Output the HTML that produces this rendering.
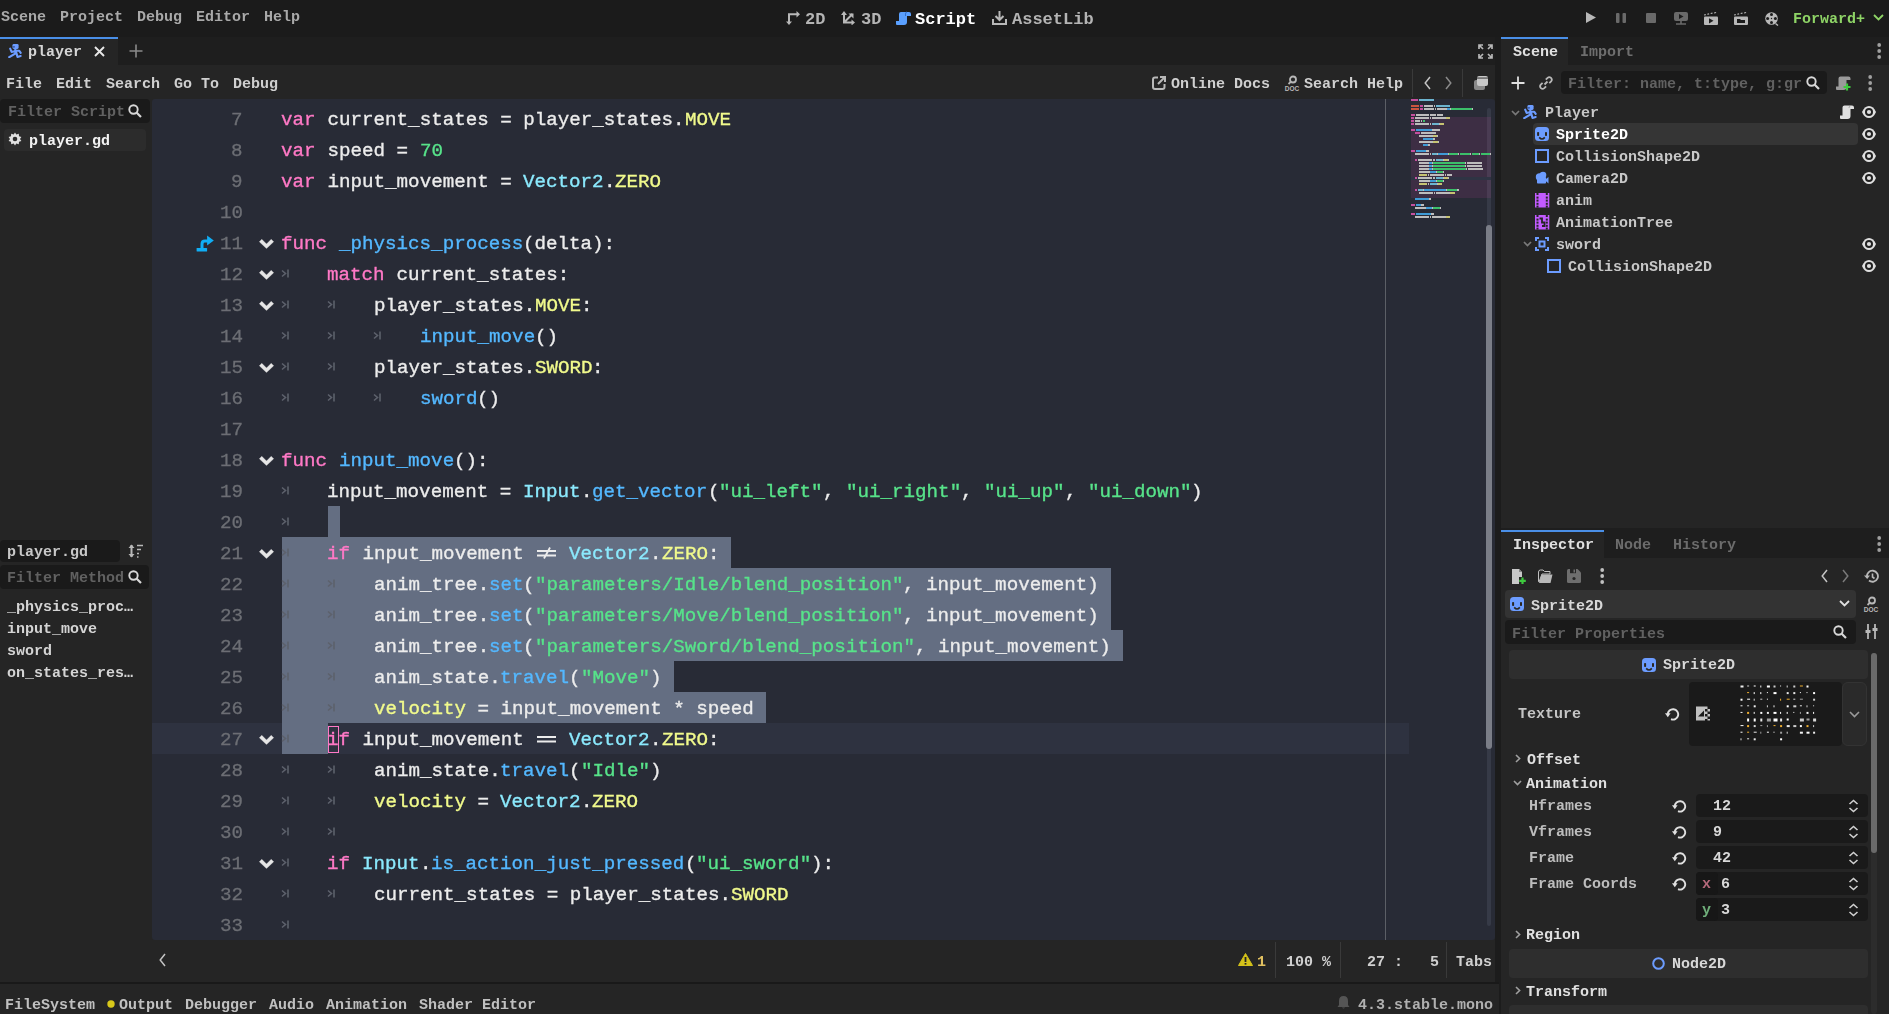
<!DOCTYPE html>
<html><head><meta charset="utf-8"><style>
html,body{margin:0;padding:0;width:1889px;height:1014px;overflow:hidden;background:#1c1c1c}
body>div,body>svg{position:absolute}
.t{font-family:"Liberation Mono";line-height:1;white-space:pre;will-change:transform}
</style></head><body>
<div style="left:0px;top:0px;width:1889px;height:37px;background:#1b1b1b;border-radius:0px;"></div>
<div class="t" style="left:1px;top:10px;font-size:15px;color:#a9a9a9;font-weight:bold;">Scene</div>
<div class="t" style="left:60px;top:10px;font-size:15px;color:#a9a9a9;font-weight:bold;">Project</div>
<div class="t" style="left:137px;top:10px;font-size:15px;color:#a9a9a9;font-weight:bold;">Debug</div>
<div class="t" style="left:196px;top:10px;font-size:15px;color:#a9a9a9;font-weight:bold;">Editor</div>
<div class="t" style="left:264px;top:10px;font-size:15px;color:#a9a9a9;font-weight:bold;">Help</div>
<div class="t" style="left:805px;top:11px;font-size:17px;color:#b4b4b4;font-weight:bold;">2D</div>
<div class="t" style="left:861px;top:11px;font-size:17px;color:#b4b4b4;font-weight:bold;">3D</div>
<div class="t" style="left:915px;top:11px;font-size:17px;color:#ffffff;font-weight:bold;">Script</div>
<div class="t" style="left:1012px;top:11px;font-size:17px;color:#b4b4b4;font-weight:bold;">AssetLib</div>
<div class="t" style="left:1793px;top:12px;font-size:15px;color:#8ed466;font-weight:bold;">Forward+</div>
<div style="left:0px;top:37px;width:1499px;height:28px;background:#1e1e1e;border-radius:0px;"></div>
<div style="left:0px;top:37px;width:118px;height:28px;background:#252525;border-radius:0px;"></div>
<div style="left:0px;top:37px;width:118px;height:2px;background:#4a8fe7;border-radius:0px;"></div>
<div class="t" style="left:28px;top:45px;font-size:15px;color:#d6d6d6;font-weight:bold;">player</div>
<div style="left:0px;top:65px;width:1499px;height:917px;background:#252525;border-radius:0px;"></div>
<div class="t" style="left:6px;top:77px;font-size:15px;color:#d0d0d0;font-weight:bold;">File</div>
<div class="t" style="left:56px;top:77px;font-size:15px;color:#d0d0d0;font-weight:bold;">Edit</div>
<div class="t" style="left:106px;top:77px;font-size:15px;color:#d0d0d0;font-weight:bold;">Search</div>
<div class="t" style="left:174px;top:77px;font-size:15px;color:#d0d0d0;font-weight:bold;">Go To</div>
<div class="t" style="left:233px;top:77px;font-size:15px;color:#d0d0d0;font-weight:bold;">Debug</div>
<div class="t" style="left:1171px;top:77px;font-size:15px;color:#d0d0d0;font-weight:bold;">Online Docs</div>
<div class="t" style="left:1304px;top:77px;font-size:15px;color:#d0d0d0;font-weight:bold;">Search Help</div>
<div style="left:1412px;top:69px;width:1px;height:28px;background:#3a3a3a;border-radius:0px;"></div>
<div style="left:1462px;top:69px;width:1px;height:28px;background:#3a3a3a;border-radius:0px;"></div>
<div style="left:0px;top:99px;width:150px;height:24px;background:#1a1a1a;border-radius:4px;"></div>
<div class="t" style="left:8px;top:105px;font-size:15px;color:#616161;font-weight:bold;">Filter Script</div>
<div style="left:4px;top:129px;width:142px;height:22px;background:#2c2c2c;border-radius:4px;"></div>
<div class="t" style="left:29px;top:134px;font-size:15px;color:#f2f2f2;font-weight:bold;">player.gd</div>
<div style="left:0px;top:540px;width:120px;height:22px;background:#1a1a1a;border-radius:4px;"></div>
<div class="t" style="left:7px;top:545px;font-size:15px;color:#c8c8c8;font-weight:bold;">player.gd</div>
<div style="left:0px;top:565px;width:149px;height:24px;background:#1a1a1a;border-radius:4px;"></div>
<div class="t" style="left:7px;top:571px;font-size:15px;color:#616161;font-weight:bold;">Filter Method</div>
<div class="t" style="left:7px;top:600px;font-size:15px;color:#d4d4d4;font-weight:bold;">_physics_proc…</div>
<div class="t" style="left:7px;top:622px;font-size:15px;color:#d4d4d4;font-weight:bold;">input_move</div>
<div class="t" style="left:7px;top:644px;font-size:15px;color:#d4d4d4;font-weight:bold;">sword</div>
<div class="t" style="left:7px;top:666px;font-size:15px;color:#d4d4d4;font-weight:bold;">on_states_res…</div>
<div style="left:152px;top:99px;width:1343px;height:841px;background:#282b36;border-radius:3px;"></div>
<div style="left:152px;top:723px;width:1257px;height:31px;background:#2e3240;border-radius:0px;"></div>
<div style="left:328px;top:506px;width:12px;height:31px;background:#646e82;border-radius:0px;"></div>
<div style="left:282px;top:537px;width:449px;height:31px;background:#646e82;border-radius:0px;"></div>
<div style="left:282px;top:568px;width:829px;height:31px;background:#646e82;border-radius:0px;"></div>
<div style="left:282px;top:599px;width:829px;height:31px;background:#646e82;border-radius:0px;"></div>
<div style="left:282px;top:630px;width:841px;height:31px;background:#646e82;border-radius:0px;"></div>
<div style="left:282px;top:661px;width:392px;height:31px;background:#646e82;border-radius:0px;"></div>
<div style="left:282px;top:692px;width:484px;height:31px;background:#646e82;border-radius:0px;"></div>
<div style="left:282px;top:723px;width:46px;height:31px;background:#646e82;border-radius:0px;"></div>
<div style="left:1385px;top:99px;width:1px;height:841px;background:#5c5f66;border-radius:0px;"></div>
<div class="t" style="right:1646px;top:110px;font-size:19.2px;color:#6c6e74;font-weight:normal;text-align:right;-webkit-text-stroke:0.3px #6c6e74;transform:translateY(0.5px)">7</div>
<div class="t" style="left:281.4px;top:110px;font-size:19.2px;color:#ff79c6;font-weight:normal;-webkit-text-stroke:0.35px #ff79c6;transform:translateY(0.5px)">var</div>
<div class="t" style="left:315.96px;top:110px;font-size:19.2px;color:#ececec;font-weight:normal;-webkit-text-stroke:0.35px #ececec;transform:translateY(0.5px)"> current_states = player_states.</div>
<div class="t" style="left:684.6px;top:110px;font-size:19.2px;color:#f1fa8c;font-weight:normal;-webkit-text-stroke:0.35px #f1fa8c;transform:translateY(0.5px)">MOVE</div>
<div class="t" style="right:1646px;top:141px;font-size:19.2px;color:#6c6e74;font-weight:normal;text-align:right;-webkit-text-stroke:0.3px #6c6e74;transform:translateY(0.5px)">8</div>
<div class="t" style="left:281.4px;top:141px;font-size:19.2px;color:#ff79c6;font-weight:normal;-webkit-text-stroke:0.35px #ff79c6;transform:translateY(0.5px)">var</div>
<div class="t" style="left:315.96px;top:141px;font-size:19.2px;color:#ececec;font-weight:normal;-webkit-text-stroke:0.35px #ececec;transform:translateY(0.5px)"> speed = </div>
<div class="t" style="left:419.64px;top:141px;font-size:19.2px;color:#57e38a;font-weight:normal;-webkit-text-stroke:0.35px #57e38a;transform:translateY(0.5px)">70</div>
<div class="t" style="right:1646px;top:172px;font-size:19.2px;color:#6c6e74;font-weight:normal;text-align:right;-webkit-text-stroke:0.3px #6c6e74;transform:translateY(0.5px)">9</div>
<div class="t" style="left:281.4px;top:172px;font-size:19.2px;color:#ff79c6;font-weight:normal;-webkit-text-stroke:0.35px #ff79c6;transform:translateY(0.5px)">var</div>
<div class="t" style="left:315.96px;top:172px;font-size:19.2px;color:#ececec;font-weight:normal;-webkit-text-stroke:0.35px #ececec;transform:translateY(0.5px)"> input_movement = </div>
<div class="t" style="left:523.32px;top:172px;font-size:19.2px;color:#8be9fd;font-weight:normal;-webkit-text-stroke:0.35px #8be9fd;transform:translateY(0.5px)">Vector2</div>
<div class="t" style="left:603.96px;top:172px;font-size:19.2px;color:#ececec;font-weight:normal;-webkit-text-stroke:0.35px #ececec;transform:translateY(0.5px)">.</div>
<div class="t" style="left:615.48px;top:172px;font-size:19.2px;color:#f1fa8c;font-weight:normal;-webkit-text-stroke:0.35px #f1fa8c;transform:translateY(0.5px)">ZERO</div>
<div class="t" style="right:1646px;top:203px;font-size:19.2px;color:#6c6e74;font-weight:normal;text-align:right;-webkit-text-stroke:0.3px #6c6e74;transform:translateY(0.5px)">10</div>
<div class="t" style="right:1646px;top:234px;font-size:19.2px;color:#6c6e74;font-weight:normal;text-align:right;-webkit-text-stroke:0.3px #6c6e74;transform:translateY(0.5px)">11</div>
<div class="t" style="left:281.4px;top:234px;font-size:19.2px;color:#ff79c6;font-weight:normal;-webkit-text-stroke:0.35px #ff79c6;transform:translateY(0.5px)">func</div>
<div class="t" style="left:327.48px;top:234px;font-size:19.2px;color:#ececec;font-weight:normal;-webkit-text-stroke:0.35px #ececec;transform:translateY(0.5px)"> </div>
<div class="t" style="left:339.0px;top:234px;font-size:19.2px;color:#54b8ff;font-weight:normal;-webkit-text-stroke:0.35px #54b8ff;transform:translateY(0.5px)">_physics_process</div>
<div class="t" style="left:523.32px;top:234px;font-size:19.2px;color:#ececec;font-weight:normal;-webkit-text-stroke:0.35px #ececec;transform:translateY(0.5px)">(delta):</div>
<div class="t" style="right:1646px;top:265px;font-size:19.2px;color:#6c6e74;font-weight:normal;text-align:right;-webkit-text-stroke:0.3px #6c6e74;transform:translateY(0.5px)">12</div>
<svg style="left:281px;top:269px" width="9" height="9" viewBox="0 0 9 9"><path d="M1 1.5 L4.5 4.5 L1 7.5" fill="none" stroke="#5d616c" stroke-width="1.6"/><rect x="6.2" y="0.5" width="1.6" height="8" fill="#5d616c"/></svg>
<div class="t" style="left:327.48px;top:265px;font-size:19.2px;color:#ff79c6;font-weight:normal;-webkit-text-stroke:0.35px #ff79c6;transform:translateY(0.5px)">match</div>
<div class="t" style="left:385.08px;top:265px;font-size:19.2px;color:#ececec;font-weight:normal;-webkit-text-stroke:0.35px #ececec;transform:translateY(0.5px)"> current_states:</div>
<div class="t" style="right:1646px;top:296px;font-size:19.2px;color:#6c6e74;font-weight:normal;text-align:right;-webkit-text-stroke:0.3px #6c6e74;transform:translateY(0.5px)">13</div>
<svg style="left:281px;top:300px" width="9" height="9" viewBox="0 0 9 9"><path d="M1 1.5 L4.5 4.5 L1 7.5" fill="none" stroke="#5d616c" stroke-width="1.6"/><rect x="6.2" y="0.5" width="1.6" height="8" fill="#5d616c"/></svg>
<svg style="left:327px;top:300px" width="9" height="9" viewBox="0 0 9 9"><path d="M1 1.5 L4.5 4.5 L1 7.5" fill="none" stroke="#5d616c" stroke-width="1.6"/><rect x="6.2" y="0.5" width="1.6" height="8" fill="#5d616c"/></svg>
<div class="t" style="left:373.56px;top:296px;font-size:19.2px;color:#ececec;font-weight:normal;-webkit-text-stroke:0.35px #ececec;transform:translateY(0.5px)">player_states.</div>
<div class="t" style="left:534.84px;top:296px;font-size:19.2px;color:#f1fa8c;font-weight:normal;-webkit-text-stroke:0.35px #f1fa8c;transform:translateY(0.5px)">MOVE</div>
<div class="t" style="left:580.92px;top:296px;font-size:19.2px;color:#ececec;font-weight:normal;-webkit-text-stroke:0.35px #ececec;transform:translateY(0.5px)">:</div>
<div class="t" style="right:1646px;top:327px;font-size:19.2px;color:#6c6e74;font-weight:normal;text-align:right;-webkit-text-stroke:0.3px #6c6e74;transform:translateY(0.5px)">14</div>
<svg style="left:281px;top:331px" width="9" height="9" viewBox="0 0 9 9"><path d="M1 1.5 L4.5 4.5 L1 7.5" fill="none" stroke="#5d616c" stroke-width="1.6"/><rect x="6.2" y="0.5" width="1.6" height="8" fill="#5d616c"/></svg>
<svg style="left:327px;top:331px" width="9" height="9" viewBox="0 0 9 9"><path d="M1 1.5 L4.5 4.5 L1 7.5" fill="none" stroke="#5d616c" stroke-width="1.6"/><rect x="6.2" y="0.5" width="1.6" height="8" fill="#5d616c"/></svg>
<svg style="left:373px;top:331px" width="9" height="9" viewBox="0 0 9 9"><path d="M1 1.5 L4.5 4.5 L1 7.5" fill="none" stroke="#5d616c" stroke-width="1.6"/><rect x="6.2" y="0.5" width="1.6" height="8" fill="#5d616c"/></svg>
<div class="t" style="left:419.64px;top:327px;font-size:19.2px;color:#54b8ff;font-weight:normal;-webkit-text-stroke:0.35px #54b8ff;transform:translateY(0.5px)">input_move</div>
<div class="t" style="left:534.84px;top:327px;font-size:19.2px;color:#ececec;font-weight:normal;-webkit-text-stroke:0.35px #ececec;transform:translateY(0.5px)">()</div>
<div class="t" style="right:1646px;top:358px;font-size:19.2px;color:#6c6e74;font-weight:normal;text-align:right;-webkit-text-stroke:0.3px #6c6e74;transform:translateY(0.5px)">15</div>
<svg style="left:281px;top:362px" width="9" height="9" viewBox="0 0 9 9"><path d="M1 1.5 L4.5 4.5 L1 7.5" fill="none" stroke="#5d616c" stroke-width="1.6"/><rect x="6.2" y="0.5" width="1.6" height="8" fill="#5d616c"/></svg>
<svg style="left:327px;top:362px" width="9" height="9" viewBox="0 0 9 9"><path d="M1 1.5 L4.5 4.5 L1 7.5" fill="none" stroke="#5d616c" stroke-width="1.6"/><rect x="6.2" y="0.5" width="1.6" height="8" fill="#5d616c"/></svg>
<div class="t" style="left:373.56px;top:358px;font-size:19.2px;color:#ececec;font-weight:normal;-webkit-text-stroke:0.35px #ececec;transform:translateY(0.5px)">player_states.</div>
<div class="t" style="left:534.84px;top:358px;font-size:19.2px;color:#f1fa8c;font-weight:normal;-webkit-text-stroke:0.35px #f1fa8c;transform:translateY(0.5px)">SWORD</div>
<div class="t" style="left:592.44px;top:358px;font-size:19.2px;color:#ececec;font-weight:normal;-webkit-text-stroke:0.35px #ececec;transform:translateY(0.5px)">:</div>
<div class="t" style="right:1646px;top:389px;font-size:19.2px;color:#6c6e74;font-weight:normal;text-align:right;-webkit-text-stroke:0.3px #6c6e74;transform:translateY(0.5px)">16</div>
<svg style="left:281px;top:393px" width="9" height="9" viewBox="0 0 9 9"><path d="M1 1.5 L4.5 4.5 L1 7.5" fill="none" stroke="#5d616c" stroke-width="1.6"/><rect x="6.2" y="0.5" width="1.6" height="8" fill="#5d616c"/></svg>
<svg style="left:327px;top:393px" width="9" height="9" viewBox="0 0 9 9"><path d="M1 1.5 L4.5 4.5 L1 7.5" fill="none" stroke="#5d616c" stroke-width="1.6"/><rect x="6.2" y="0.5" width="1.6" height="8" fill="#5d616c"/></svg>
<svg style="left:373px;top:393px" width="9" height="9" viewBox="0 0 9 9"><path d="M1 1.5 L4.5 4.5 L1 7.5" fill="none" stroke="#5d616c" stroke-width="1.6"/><rect x="6.2" y="0.5" width="1.6" height="8" fill="#5d616c"/></svg>
<div class="t" style="left:419.64px;top:389px;font-size:19.2px;color:#54b8ff;font-weight:normal;-webkit-text-stroke:0.35px #54b8ff;transform:translateY(0.5px)">sword</div>
<div class="t" style="left:477.24px;top:389px;font-size:19.2px;color:#ececec;font-weight:normal;-webkit-text-stroke:0.35px #ececec;transform:translateY(0.5px)">()</div>
<div class="t" style="right:1646px;top:420px;font-size:19.2px;color:#6c6e74;font-weight:normal;text-align:right;-webkit-text-stroke:0.3px #6c6e74;transform:translateY(0.5px)">17</div>
<div class="t" style="right:1646px;top:451px;font-size:19.2px;color:#6c6e74;font-weight:normal;text-align:right;-webkit-text-stroke:0.3px #6c6e74;transform:translateY(0.5px)">18</div>
<div class="t" style="left:281.4px;top:451px;font-size:19.2px;color:#ff79c6;font-weight:normal;-webkit-text-stroke:0.35px #ff79c6;transform:translateY(0.5px)">func</div>
<div class="t" style="left:327.48px;top:451px;font-size:19.2px;color:#ececec;font-weight:normal;-webkit-text-stroke:0.35px #ececec;transform:translateY(0.5px)"> </div>
<div class="t" style="left:339.0px;top:451px;font-size:19.2px;color:#54b8ff;font-weight:normal;-webkit-text-stroke:0.35px #54b8ff;transform:translateY(0.5px)">input_move</div>
<div class="t" style="left:454.2px;top:451px;font-size:19.2px;color:#ececec;font-weight:normal;-webkit-text-stroke:0.35px #ececec;transform:translateY(0.5px)">():</div>
<div class="t" style="right:1646px;top:482px;font-size:19.2px;color:#6c6e74;font-weight:normal;text-align:right;-webkit-text-stroke:0.3px #6c6e74;transform:translateY(0.5px)">19</div>
<svg style="left:281px;top:486px" width="9" height="9" viewBox="0 0 9 9"><path d="M1 1.5 L4.5 4.5 L1 7.5" fill="none" stroke="#5d616c" stroke-width="1.6"/><rect x="6.2" y="0.5" width="1.6" height="8" fill="#5d616c"/></svg>
<div class="t" style="left:327.48px;top:482px;font-size:19.2px;color:#ececec;font-weight:normal;-webkit-text-stroke:0.35px #ececec;transform:translateY(0.5px)">input_movement = </div>
<div class="t" style="left:523.32px;top:482px;font-size:19.2px;color:#8be9fd;font-weight:normal;-webkit-text-stroke:0.35px #8be9fd;transform:translateY(0.5px)">Input</div>
<div class="t" style="left:580.92px;top:482px;font-size:19.2px;color:#ececec;font-weight:normal;-webkit-text-stroke:0.35px #ececec;transform:translateY(0.5px)">.</div>
<div class="t" style="left:592.44px;top:482px;font-size:19.2px;color:#54b8ff;font-weight:normal;-webkit-text-stroke:0.35px #54b8ff;transform:translateY(0.5px)">get_vector</div>
<div class="t" style="left:707.64px;top:482px;font-size:19.2px;color:#ececec;font-weight:normal;-webkit-text-stroke:0.35px #ececec;transform:translateY(0.5px)">(</div>
<div class="t" style="left:719.16px;top:482px;font-size:19.2px;color:#57e38a;font-weight:normal;-webkit-text-stroke:0.35px #57e38a;transform:translateY(0.5px)">&quot;ui_left&quot;</div>
<div class="t" style="left:822.84px;top:482px;font-size:19.2px;color:#ececec;font-weight:normal;-webkit-text-stroke:0.35px #ececec;transform:translateY(0.5px)">, </div>
<div class="t" style="left:845.88px;top:482px;font-size:19.2px;color:#57e38a;font-weight:normal;-webkit-text-stroke:0.35px #57e38a;transform:translateY(0.5px)">&quot;ui_right&quot;</div>
<div class="t" style="left:961.08px;top:482px;font-size:19.2px;color:#ececec;font-weight:normal;-webkit-text-stroke:0.35px #ececec;transform:translateY(0.5px)">, </div>
<div class="t" style="left:984.12px;top:482px;font-size:19.2px;color:#57e38a;font-weight:normal;-webkit-text-stroke:0.35px #57e38a;transform:translateY(0.5px)">&quot;ui_up&quot;</div>
<div class="t" style="left:1064.76px;top:482px;font-size:19.2px;color:#ececec;font-weight:normal;-webkit-text-stroke:0.35px #ececec;transform:translateY(0.5px)">, </div>
<div class="t" style="left:1087.8px;top:482px;font-size:19.2px;color:#57e38a;font-weight:normal;-webkit-text-stroke:0.35px #57e38a;transform:translateY(0.5px)">&quot;ui_down&quot;</div>
<div class="t" style="left:1191.48px;top:482px;font-size:19.2px;color:#ececec;font-weight:normal;-webkit-text-stroke:0.35px #ececec;transform:translateY(0.5px)">)</div>
<div class="t" style="right:1646px;top:513px;font-size:19.2px;color:#6c6e74;font-weight:normal;text-align:right;-webkit-text-stroke:0.3px #6c6e74;transform:translateY(0.5px)">20</div>
<svg style="left:281px;top:517px" width="9" height="9" viewBox="0 0 9 9"><path d="M1 1.5 L4.5 4.5 L1 7.5" fill="none" stroke="#5d616c" stroke-width="1.6"/><rect x="6.2" y="0.5" width="1.6" height="8" fill="#5d616c"/></svg>
<div class="t" style="right:1646px;top:544px;font-size:19.2px;color:#6c6e74;font-weight:normal;text-align:right;-webkit-text-stroke:0.3px #6c6e74;transform:translateY(0.5px)">21</div>
<svg style="left:281px;top:548px" width="9" height="9" viewBox="0 0 9 9"><path d="M1 1.5 L4.5 4.5 L1 7.5" fill="none" stroke="#5d616c" stroke-width="1.6"/><rect x="6.2" y="0.5" width="1.6" height="8" fill="#5d616c"/></svg>
<div class="t" style="left:327.48px;top:544px;font-size:19.2px;color:#ff79c6;font-weight:normal;-webkit-text-stroke:0.35px #ff79c6;transform:translateY(0.5px)">if</div>
<div class="t" style="left:350.52px;top:544px;font-size:19.2px;color:#ececec;font-weight:normal;-webkit-text-stroke:0.35px #ececec;transform:translateY(0.5px)"> input_movement </div>
<svg style="left:535px;top:547px" width="23" height="12" viewBox="0 0 23 12"><path d="M2 4H21M2 8.5H21M9 11.5L15 0.5" stroke="#ececec" stroke-width="1.8" fill="none"/></svg>
<div class="t" style="left:557.88px;top:544px;font-size:19.2px;color:#ececec;font-weight:normal;-webkit-text-stroke:0.35px #ececec;transform:translateY(0.5px)"> </div>
<div class="t" style="left:569.4px;top:544px;font-size:19.2px;color:#8be9fd;font-weight:normal;-webkit-text-stroke:0.35px #8be9fd;transform:translateY(0.5px)">Vector2</div>
<div class="t" style="left:650.04px;top:544px;font-size:19.2px;color:#ececec;font-weight:normal;-webkit-text-stroke:0.35px #ececec;transform:translateY(0.5px)">.</div>
<div class="t" style="left:661.56px;top:544px;font-size:19.2px;color:#f1fa8c;font-weight:normal;-webkit-text-stroke:0.35px #f1fa8c;transform:translateY(0.5px)">ZERO</div>
<div class="t" style="left:707.64px;top:544px;font-size:19.2px;color:#ececec;font-weight:normal;-webkit-text-stroke:0.35px #ececec;transform:translateY(0.5px)">:</div>
<div class="t" style="right:1646px;top:575px;font-size:19.2px;color:#6c6e74;font-weight:normal;text-align:right;-webkit-text-stroke:0.3px #6c6e74;transform:translateY(0.5px)">22</div>
<svg style="left:281px;top:579px" width="9" height="9" viewBox="0 0 9 9"><path d="M1 1.5 L4.5 4.5 L1 7.5" fill="none" stroke="#5d616c" stroke-width="1.6"/><rect x="6.2" y="0.5" width="1.6" height="8" fill="#5d616c"/></svg>
<svg style="left:327px;top:579px" width="9" height="9" viewBox="0 0 9 9"><path d="M1 1.5 L4.5 4.5 L1 7.5" fill="none" stroke="#5d616c" stroke-width="1.6"/><rect x="6.2" y="0.5" width="1.6" height="8" fill="#5d616c"/></svg>
<div class="t" style="left:373.56px;top:575px;font-size:19.2px;color:#ececec;font-weight:normal;-webkit-text-stroke:0.35px #ececec;transform:translateY(0.5px)">anim_tree.</div>
<div class="t" style="left:488.76px;top:575px;font-size:19.2px;color:#54b8ff;font-weight:normal;-webkit-text-stroke:0.35px #54b8ff;transform:translateY(0.5px)">set</div>
<div class="t" style="left:523.32px;top:575px;font-size:19.2px;color:#ececec;font-weight:normal;-webkit-text-stroke:0.35px #ececec;transform:translateY(0.5px)">(</div>
<div class="t" style="left:534.84px;top:575px;font-size:19.2px;color:#57e38a;font-weight:normal;-webkit-text-stroke:0.35px #57e38a;transform:translateY(0.5px)">&quot;parameters/Idle/blend_position&quot;</div>
<div class="t" style="left:903.48px;top:575px;font-size:19.2px;color:#ececec;font-weight:normal;-webkit-text-stroke:0.35px #ececec;transform:translateY(0.5px)">, input_movement)</div>
<div class="t" style="right:1646px;top:606px;font-size:19.2px;color:#6c6e74;font-weight:normal;text-align:right;-webkit-text-stroke:0.3px #6c6e74;transform:translateY(0.5px)">23</div>
<svg style="left:281px;top:610px" width="9" height="9" viewBox="0 0 9 9"><path d="M1 1.5 L4.5 4.5 L1 7.5" fill="none" stroke="#5d616c" stroke-width="1.6"/><rect x="6.2" y="0.5" width="1.6" height="8" fill="#5d616c"/></svg>
<svg style="left:327px;top:610px" width="9" height="9" viewBox="0 0 9 9"><path d="M1 1.5 L4.5 4.5 L1 7.5" fill="none" stroke="#5d616c" stroke-width="1.6"/><rect x="6.2" y="0.5" width="1.6" height="8" fill="#5d616c"/></svg>
<div class="t" style="left:373.56px;top:606px;font-size:19.2px;color:#ececec;font-weight:normal;-webkit-text-stroke:0.35px #ececec;transform:translateY(0.5px)">anim_tree.</div>
<div class="t" style="left:488.76px;top:606px;font-size:19.2px;color:#54b8ff;font-weight:normal;-webkit-text-stroke:0.35px #54b8ff;transform:translateY(0.5px)">set</div>
<div class="t" style="left:523.32px;top:606px;font-size:19.2px;color:#ececec;font-weight:normal;-webkit-text-stroke:0.35px #ececec;transform:translateY(0.5px)">(</div>
<div class="t" style="left:534.84px;top:606px;font-size:19.2px;color:#57e38a;font-weight:normal;-webkit-text-stroke:0.35px #57e38a;transform:translateY(0.5px)">&quot;parameters/Move/blend_position&quot;</div>
<div class="t" style="left:903.48px;top:606px;font-size:19.2px;color:#ececec;font-weight:normal;-webkit-text-stroke:0.35px #ececec;transform:translateY(0.5px)">, input_movement)</div>
<div class="t" style="right:1646px;top:637px;font-size:19.2px;color:#6c6e74;font-weight:normal;text-align:right;-webkit-text-stroke:0.3px #6c6e74;transform:translateY(0.5px)">24</div>
<svg style="left:281px;top:641px" width="9" height="9" viewBox="0 0 9 9"><path d="M1 1.5 L4.5 4.5 L1 7.5" fill="none" stroke="#5d616c" stroke-width="1.6"/><rect x="6.2" y="0.5" width="1.6" height="8" fill="#5d616c"/></svg>
<svg style="left:327px;top:641px" width="9" height="9" viewBox="0 0 9 9"><path d="M1 1.5 L4.5 4.5 L1 7.5" fill="none" stroke="#5d616c" stroke-width="1.6"/><rect x="6.2" y="0.5" width="1.6" height="8" fill="#5d616c"/></svg>
<div class="t" style="left:373.56px;top:637px;font-size:19.2px;color:#ececec;font-weight:normal;-webkit-text-stroke:0.35px #ececec;transform:translateY(0.5px)">anim_tree.</div>
<div class="t" style="left:488.76px;top:637px;font-size:19.2px;color:#54b8ff;font-weight:normal;-webkit-text-stroke:0.35px #54b8ff;transform:translateY(0.5px)">set</div>
<div class="t" style="left:523.32px;top:637px;font-size:19.2px;color:#ececec;font-weight:normal;-webkit-text-stroke:0.35px #ececec;transform:translateY(0.5px)">(</div>
<div class="t" style="left:534.84px;top:637px;font-size:19.2px;color:#57e38a;font-weight:normal;-webkit-text-stroke:0.35px #57e38a;transform:translateY(0.5px)">&quot;parameters/Sword/blend_position&quot;</div>
<div class="t" style="left:915.0px;top:637px;font-size:19.2px;color:#ececec;font-weight:normal;-webkit-text-stroke:0.35px #ececec;transform:translateY(0.5px)">, input_movement)</div>
<div class="t" style="right:1646px;top:668px;font-size:19.2px;color:#6c6e74;font-weight:normal;text-align:right;-webkit-text-stroke:0.3px #6c6e74;transform:translateY(0.5px)">25</div>
<svg style="left:281px;top:672px" width="9" height="9" viewBox="0 0 9 9"><path d="M1 1.5 L4.5 4.5 L1 7.5" fill="none" stroke="#5d616c" stroke-width="1.6"/><rect x="6.2" y="0.5" width="1.6" height="8" fill="#5d616c"/></svg>
<svg style="left:327px;top:672px" width="9" height="9" viewBox="0 0 9 9"><path d="M1 1.5 L4.5 4.5 L1 7.5" fill="none" stroke="#5d616c" stroke-width="1.6"/><rect x="6.2" y="0.5" width="1.6" height="8" fill="#5d616c"/></svg>
<div class="t" style="left:373.56px;top:668px;font-size:19.2px;color:#ececec;font-weight:normal;-webkit-text-stroke:0.35px #ececec;transform:translateY(0.5px)">anim_state.</div>
<div class="t" style="left:500.28px;top:668px;font-size:19.2px;color:#54b8ff;font-weight:normal;-webkit-text-stroke:0.35px #54b8ff;transform:translateY(0.5px)">travel</div>
<div class="t" style="left:569.4px;top:668px;font-size:19.2px;color:#ececec;font-weight:normal;-webkit-text-stroke:0.35px #ececec;transform:translateY(0.5px)">(</div>
<div class="t" style="left:580.92px;top:668px;font-size:19.2px;color:#57e38a;font-weight:normal;-webkit-text-stroke:0.35px #57e38a;transform:translateY(0.5px)">&quot;Move&quot;</div>
<div class="t" style="left:650.04px;top:668px;font-size:19.2px;color:#ececec;font-weight:normal;-webkit-text-stroke:0.35px #ececec;transform:translateY(0.5px)">)</div>
<div class="t" style="right:1646px;top:699px;font-size:19.2px;color:#6c6e74;font-weight:normal;text-align:right;-webkit-text-stroke:0.3px #6c6e74;transform:translateY(0.5px)">26</div>
<svg style="left:281px;top:703px" width="9" height="9" viewBox="0 0 9 9"><path d="M1 1.5 L4.5 4.5 L1 7.5" fill="none" stroke="#5d616c" stroke-width="1.6"/><rect x="6.2" y="0.5" width="1.6" height="8" fill="#5d616c"/></svg>
<svg style="left:327px;top:703px" width="9" height="9" viewBox="0 0 9 9"><path d="M1 1.5 L4.5 4.5 L1 7.5" fill="none" stroke="#5d616c" stroke-width="1.6"/><rect x="6.2" y="0.5" width="1.6" height="8" fill="#5d616c"/></svg>
<div class="t" style="left:373.56px;top:699px;font-size:19.2px;color:#f1fa8c;font-weight:normal;-webkit-text-stroke:0.35px #f1fa8c;transform:translateY(0.5px)">velocity</div>
<div class="t" style="left:465.72px;top:699px;font-size:19.2px;color:#ececec;font-weight:normal;-webkit-text-stroke:0.35px #ececec;transform:translateY(0.5px)"> = input_movement * speed</div>
<div class="t" style="right:1646px;top:730px;font-size:19.2px;color:#6c6e74;font-weight:normal;text-align:right;-webkit-text-stroke:0.3px #6c6e74;transform:translateY(0.5px)">27</div>
<svg style="left:281px;top:734px" width="9" height="9" viewBox="0 0 9 9"><path d="M1 1.5 L4.5 4.5 L1 7.5" fill="none" stroke="#5d616c" stroke-width="1.6"/><rect x="6.2" y="0.5" width="1.6" height="8" fill="#5d616c"/></svg>
<div class="t" style="left:327.48px;top:730px;font-size:19.2px;color:#ff79c6;font-weight:normal;-webkit-text-stroke:0.35px #ff79c6;transform:translateY(0.5px)">if</div>
<div class="t" style="left:350.52px;top:730px;font-size:19.2px;color:#ececec;font-weight:normal;-webkit-text-stroke:0.35px #ececec;transform:translateY(0.5px)"> input_movement </div>
<svg style="left:535px;top:733px" width="23" height="12" viewBox="0 0 23 12"><path d="M2 4H21M2 8.5H21" stroke="#ececec" stroke-width="1.8" fill="none"/></svg>
<div class="t" style="left:557.88px;top:730px;font-size:19.2px;color:#ececec;font-weight:normal;-webkit-text-stroke:0.35px #ececec;transform:translateY(0.5px)"> </div>
<div class="t" style="left:569.4px;top:730px;font-size:19.2px;color:#8be9fd;font-weight:normal;-webkit-text-stroke:0.35px #8be9fd;transform:translateY(0.5px)">Vector2</div>
<div class="t" style="left:650.04px;top:730px;font-size:19.2px;color:#ececec;font-weight:normal;-webkit-text-stroke:0.35px #ececec;transform:translateY(0.5px)">.</div>
<div class="t" style="left:661.56px;top:730px;font-size:19.2px;color:#f1fa8c;font-weight:normal;-webkit-text-stroke:0.35px #f1fa8c;transform:translateY(0.5px)">ZERO</div>
<div class="t" style="left:707.64px;top:730px;font-size:19.2px;color:#ececec;font-weight:normal;-webkit-text-stroke:0.35px #ececec;transform:translateY(0.5px)">:</div>
<div class="t" style="right:1646px;top:761px;font-size:19.2px;color:#6c6e74;font-weight:normal;text-align:right;-webkit-text-stroke:0.3px #6c6e74;transform:translateY(0.5px)">28</div>
<svg style="left:281px;top:765px" width="9" height="9" viewBox="0 0 9 9"><path d="M1 1.5 L4.5 4.5 L1 7.5" fill="none" stroke="#5d616c" stroke-width="1.6"/><rect x="6.2" y="0.5" width="1.6" height="8" fill="#5d616c"/></svg>
<svg style="left:327px;top:765px" width="9" height="9" viewBox="0 0 9 9"><path d="M1 1.5 L4.5 4.5 L1 7.5" fill="none" stroke="#5d616c" stroke-width="1.6"/><rect x="6.2" y="0.5" width="1.6" height="8" fill="#5d616c"/></svg>
<div class="t" style="left:373.56px;top:761px;font-size:19.2px;color:#ececec;font-weight:normal;-webkit-text-stroke:0.35px #ececec;transform:translateY(0.5px)">anim_state.</div>
<div class="t" style="left:500.28px;top:761px;font-size:19.2px;color:#54b8ff;font-weight:normal;-webkit-text-stroke:0.35px #54b8ff;transform:translateY(0.5px)">travel</div>
<div class="t" style="left:569.4px;top:761px;font-size:19.2px;color:#ececec;font-weight:normal;-webkit-text-stroke:0.35px #ececec;transform:translateY(0.5px)">(</div>
<div class="t" style="left:580.92px;top:761px;font-size:19.2px;color:#57e38a;font-weight:normal;-webkit-text-stroke:0.35px #57e38a;transform:translateY(0.5px)">&quot;Idle&quot;</div>
<div class="t" style="left:650.04px;top:761px;font-size:19.2px;color:#ececec;font-weight:normal;-webkit-text-stroke:0.35px #ececec;transform:translateY(0.5px)">)</div>
<div class="t" style="right:1646px;top:792px;font-size:19.2px;color:#6c6e74;font-weight:normal;text-align:right;-webkit-text-stroke:0.3px #6c6e74;transform:translateY(0.5px)">29</div>
<svg style="left:281px;top:796px" width="9" height="9" viewBox="0 0 9 9"><path d="M1 1.5 L4.5 4.5 L1 7.5" fill="none" stroke="#5d616c" stroke-width="1.6"/><rect x="6.2" y="0.5" width="1.6" height="8" fill="#5d616c"/></svg>
<svg style="left:327px;top:796px" width="9" height="9" viewBox="0 0 9 9"><path d="M1 1.5 L4.5 4.5 L1 7.5" fill="none" stroke="#5d616c" stroke-width="1.6"/><rect x="6.2" y="0.5" width="1.6" height="8" fill="#5d616c"/></svg>
<div class="t" style="left:373.56px;top:792px;font-size:19.2px;color:#f1fa8c;font-weight:normal;-webkit-text-stroke:0.35px #f1fa8c;transform:translateY(0.5px)">velocity</div>
<div class="t" style="left:465.72px;top:792px;font-size:19.2px;color:#ececec;font-weight:normal;-webkit-text-stroke:0.35px #ececec;transform:translateY(0.5px)"> = </div>
<div class="t" style="left:500.28px;top:792px;font-size:19.2px;color:#8be9fd;font-weight:normal;-webkit-text-stroke:0.35px #8be9fd;transform:translateY(0.5px)">Vector2</div>
<div class="t" style="left:580.92px;top:792px;font-size:19.2px;color:#ececec;font-weight:normal;-webkit-text-stroke:0.35px #ececec;transform:translateY(0.5px)">.</div>
<div class="t" style="left:592.44px;top:792px;font-size:19.2px;color:#f1fa8c;font-weight:normal;-webkit-text-stroke:0.35px #f1fa8c;transform:translateY(0.5px)">ZERO</div>
<div class="t" style="right:1646px;top:823px;font-size:19.2px;color:#6c6e74;font-weight:normal;text-align:right;-webkit-text-stroke:0.3px #6c6e74;transform:translateY(0.5px)">30</div>
<svg style="left:281px;top:827px" width="9" height="9" viewBox="0 0 9 9"><path d="M1 1.5 L4.5 4.5 L1 7.5" fill="none" stroke="#5d616c" stroke-width="1.6"/><rect x="6.2" y="0.5" width="1.6" height="8" fill="#5d616c"/></svg>
<svg style="left:327px;top:827px" width="9" height="9" viewBox="0 0 9 9"><path d="M1 1.5 L4.5 4.5 L1 7.5" fill="none" stroke="#5d616c" stroke-width="1.6"/><rect x="6.2" y="0.5" width="1.6" height="8" fill="#5d616c"/></svg>
<div class="t" style="right:1646px;top:854px;font-size:19.2px;color:#6c6e74;font-weight:normal;text-align:right;-webkit-text-stroke:0.3px #6c6e74;transform:translateY(0.5px)">31</div>
<svg style="left:281px;top:858px" width="9" height="9" viewBox="0 0 9 9"><path d="M1 1.5 L4.5 4.5 L1 7.5" fill="none" stroke="#5d616c" stroke-width="1.6"/><rect x="6.2" y="0.5" width="1.6" height="8" fill="#5d616c"/></svg>
<div class="t" style="left:327.48px;top:854px;font-size:19.2px;color:#ff79c6;font-weight:normal;-webkit-text-stroke:0.35px #ff79c6;transform:translateY(0.5px)">if</div>
<div class="t" style="left:350.52px;top:854px;font-size:19.2px;color:#ececec;font-weight:normal;-webkit-text-stroke:0.35px #ececec;transform:translateY(0.5px)"> </div>
<div class="t" style="left:362.04px;top:854px;font-size:19.2px;color:#8be9fd;font-weight:normal;-webkit-text-stroke:0.35px #8be9fd;transform:translateY(0.5px)">Input</div>
<div class="t" style="left:419.64px;top:854px;font-size:19.2px;color:#ececec;font-weight:normal;-webkit-text-stroke:0.35px #ececec;transform:translateY(0.5px)">.</div>
<div class="t" style="left:431.16px;top:854px;font-size:19.2px;color:#54b8ff;font-weight:normal;-webkit-text-stroke:0.35px #54b8ff;transform:translateY(0.5px)">is_action_just_pressed</div>
<div class="t" style="left:684.6px;top:854px;font-size:19.2px;color:#ececec;font-weight:normal;-webkit-text-stroke:0.35px #ececec;transform:translateY(0.5px)">(</div>
<div class="t" style="left:696.12px;top:854px;font-size:19.2px;color:#57e38a;font-weight:normal;-webkit-text-stroke:0.35px #57e38a;transform:translateY(0.5px)">&quot;ui_sword&quot;</div>
<div class="t" style="left:811.32px;top:854px;font-size:19.2px;color:#ececec;font-weight:normal;-webkit-text-stroke:0.35px #ececec;transform:translateY(0.5px)">):</div>
<div class="t" style="right:1646px;top:885px;font-size:19.2px;color:#6c6e74;font-weight:normal;text-align:right;-webkit-text-stroke:0.3px #6c6e74;transform:translateY(0.5px)">32</div>
<svg style="left:281px;top:889px" width="9" height="9" viewBox="0 0 9 9"><path d="M1 1.5 L4.5 4.5 L1 7.5" fill="none" stroke="#5d616c" stroke-width="1.6"/><rect x="6.2" y="0.5" width="1.6" height="8" fill="#5d616c"/></svg>
<svg style="left:327px;top:889px" width="9" height="9" viewBox="0 0 9 9"><path d="M1 1.5 L4.5 4.5 L1 7.5" fill="none" stroke="#5d616c" stroke-width="1.6"/><rect x="6.2" y="0.5" width="1.6" height="8" fill="#5d616c"/></svg>
<div class="t" style="left:373.56px;top:885px;font-size:19.2px;color:#ececec;font-weight:normal;-webkit-text-stroke:0.35px #ececec;transform:translateY(0.5px)">current_states = player_states.</div>
<div class="t" style="left:730.68px;top:885px;font-size:19.2px;color:#f1fa8c;font-weight:normal;-webkit-text-stroke:0.35px #f1fa8c;transform:translateY(0.5px)">SWORD</div>
<div class="t" style="right:1646px;top:916px;font-size:19.2px;color:#6c6e74;font-weight:normal;text-align:right;-webkit-text-stroke:0.3px #6c6e74;transform:translateY(0.5px)">33</div>
<svg style="left:281px;top:920px" width="9" height="9" viewBox="0 0 9 9"><path d="M1 1.5 L4.5 4.5 L1 7.5" fill="none" stroke="#5d616c" stroke-width="1.6"/><rect x="6.2" y="0.5" width="1.6" height="8" fill="#5d616c"/></svg>
<svg style="left:259px;top:239px" width="15" height="10" viewBox="0 0 15 10"><path d="M0.3 2.8L2.8 0.3L7.5 5L12.2 0.3L14.7 2.8L7.5 9.6Z" fill="#e6e6e6" stroke="#e6e6e6" stroke-width="0.3" stroke-linejoin="round"/></svg>
<svg style="left:259px;top:270px" width="15" height="10" viewBox="0 0 15 10"><path d="M0.3 2.8L2.8 0.3L7.5 5L12.2 0.3L14.7 2.8L7.5 9.6Z" fill="#e6e6e6" stroke="#e6e6e6" stroke-width="0.3" stroke-linejoin="round"/></svg>
<svg style="left:259px;top:301px" width="15" height="10" viewBox="0 0 15 10"><path d="M0.3 2.8L2.8 0.3L7.5 5L12.2 0.3L14.7 2.8L7.5 9.6Z" fill="#e6e6e6" stroke="#e6e6e6" stroke-width="0.3" stroke-linejoin="round"/></svg>
<svg style="left:259px;top:363px" width="15" height="10" viewBox="0 0 15 10"><path d="M0.3 2.8L2.8 0.3L7.5 5L12.2 0.3L14.7 2.8L7.5 9.6Z" fill="#e6e6e6" stroke="#e6e6e6" stroke-width="0.3" stroke-linejoin="round"/></svg>
<svg style="left:259px;top:456px" width="15" height="10" viewBox="0 0 15 10"><path d="M0.3 2.8L2.8 0.3L7.5 5L12.2 0.3L14.7 2.8L7.5 9.6Z" fill="#e6e6e6" stroke="#e6e6e6" stroke-width="0.3" stroke-linejoin="round"/></svg>
<svg style="left:259px;top:549px" width="15" height="10" viewBox="0 0 15 10"><path d="M0.3 2.8L2.8 0.3L7.5 5L12.2 0.3L14.7 2.8L7.5 9.6Z" fill="#e6e6e6" stroke="#e6e6e6" stroke-width="0.3" stroke-linejoin="round"/></svg>
<svg style="left:259px;top:735px" width="15" height="10" viewBox="0 0 15 10"><path d="M0.3 2.8L2.8 0.3L7.5 5L12.2 0.3L14.7 2.8L7.5 9.6Z" fill="#e6e6e6" stroke="#e6e6e6" stroke-width="0.3" stroke-linejoin="round"/></svg>
<svg style="left:259px;top:859px" width="15" height="10" viewBox="0 0 15 10"><path d="M0.3 2.8L2.8 0.3L7.5 5L12.2 0.3L14.7 2.8L7.5 9.6Z" fill="#e6e6e6" stroke="#e6e6e6" stroke-width="0.3" stroke-linejoin="round"/></svg>
<div style="left:328px;top:726px;width:11px;height:27px;background:transparent;border-radius:0px;border:1px solid #ff79c6;box-sizing:border-box"></div>
<div style="left:1487px;top:108px;width:4px;height:818px;background:#363a47;border-radius:2px;"></div>
<div style="left:1411px;top:117px;width:80px;height:81px;background:rgba(255,80,200,0.1);border-radius:0px;"></div>
<div style="left:1411px;top:177px;width:80px;height:3px;background:#2f3444;border-radius:0px;"></div>
<svg style="left:1411px;top:99px" width="82" height="125" viewBox="0 0 82 125" shape-rendering="crispEdges"><rect x="0" y="0" width="7" height="2" fill="#c4509e"/><rect x="8" y="0" width="15" height="2" fill="#6cb4cf"/><rect x="0" y="6" width="8" height="2" fill="#c9553f"/><rect x="9" y="6" width="3" height="2" fill="#c4509e"/><rect x="13" y="6" width="9" height="2" fill="#bdbdbd"/><rect x="23" y="6" width="1" height="2" fill="#bdbdbd"/><rect x="25" y="6" width="14" height="2" fill="#6cb4cf"/><rect x="0" y="9" width="8" height="2" fill="#c9553f"/><rect x="9" y="9" width="3" height="2" fill="#c4509e"/><rect x="13" y="9" width="10" height="2" fill="#bdbdbd"/><rect x="24" y="9" width="1" height="2" fill="#bdbdbd"/><rect x="26" y="9" width="10" height="2" fill="#bdbdbd"/><rect x="36" y="9" width="3" height="2" fill="#3f9bd6"/><rect x="39" y="9" width="1" height="2" fill="#bdbdbd"/><rect x="40" y="9" width="21" height="2" fill="#3cbf6a"/><rect x="61" y="9" width="1" height="2" fill="#bdbdbd"/><rect x="0" y="15" width="4" height="2" fill="#c4509e"/><rect x="5" y="15" width="13" height="2" fill="#bdbdbd"/><rect x="19" y="15" width="6" height="2" fill="#bdbdbd"/><rect x="26" y="15" width="6" height="2" fill="#bdbdbd"/><rect x="0" y="18" width="3" height="2" fill="#c4509e"/><rect x="4" y="18" width="14" height="2" fill="#bdbdbd"/><rect x="19" y="18" width="1" height="2" fill="#bdbdbd"/><rect x="21" y="18" width="14" height="2" fill="#bdbdbd"/><rect x="35" y="18" width="4" height="2" fill="#c6c272"/><rect x="0" y="21" width="3" height="2" fill="#c4509e"/><rect x="4" y="21" width="5" height="2" fill="#bdbdbd"/><rect x="10" y="21" width="1" height="2" fill="#bdbdbd"/><rect x="12" y="21" width="2" height="2" fill="#3cbf6a"/><rect x="0" y="24" width="3" height="2" fill="#c4509e"/><rect x="4" y="24" width="14" height="2" fill="#bdbdbd"/><rect x="19" y="24" width="1" height="2" fill="#bdbdbd"/><rect x="21" y="24" width="7" height="2" fill="#6cb4cf"/><rect x="28" y="24" width="1" height="2" fill="#bdbdbd"/><rect x="29" y="24" width="4" height="2" fill="#c6c272"/><rect x="0" y="30" width="4" height="2" fill="#c4509e"/><rect x="5" y="30" width="16" height="2" fill="#3f9bd6"/><rect x="21" y="30" width="8" height="2" fill="#bdbdbd"/><rect x="4" y="33" width="5" height="2" fill="#c4509e"/><rect x="10" y="33" width="15" height="2" fill="#bdbdbd"/><rect x="8" y="36" width="14" height="2" fill="#bdbdbd"/><rect x="22" y="36" width="4" height="2" fill="#c6c272"/><rect x="26" y="36" width="1" height="2" fill="#bdbdbd"/><rect x="12" y="39" width="10" height="2" fill="#3f9bd6"/><rect x="22" y="39" width="2" height="2" fill="#bdbdbd"/><rect x="8" y="42" width="14" height="2" fill="#bdbdbd"/><rect x="22" y="42" width="5" height="2" fill="#c6c272"/><rect x="27" y="42" width="1" height="2" fill="#bdbdbd"/><rect x="12" y="45" width="5" height="2" fill="#3f9bd6"/><rect x="17" y="45" width="2" height="2" fill="#bdbdbd"/><rect x="0" y="51" width="4" height="2" fill="#c4509e"/><rect x="5" y="51" width="10" height="2" fill="#3f9bd6"/><rect x="15" y="51" width="3" height="2" fill="#bdbdbd"/><rect x="4" y="54" width="14" height="2" fill="#bdbdbd"/><rect x="19" y="54" width="1" height="2" fill="#bdbdbd"/><rect x="21" y="54" width="5" height="2" fill="#6cb4cf"/><rect x="26" y="54" width="1" height="2" fill="#bdbdbd"/><rect x="27" y="54" width="10" height="2" fill="#3f9bd6"/><rect x="37" y="54" width="1" height="2" fill="#bdbdbd"/><rect x="38" y="54" width="9" height="2" fill="#3cbf6a"/><rect x="47" y="54" width="1" height="2" fill="#bdbdbd"/><rect x="49" y="54" width="10" height="2" fill="#3cbf6a"/><rect x="59" y="54" width="1" height="2" fill="#bdbdbd"/><rect x="61" y="54" width="7" height="2" fill="#3cbf6a"/><rect x="68" y="54" width="1" height="2" fill="#bdbdbd"/><rect x="70" y="54" width="9" height="2" fill="#3cbf6a"/><rect x="79" y="54" width="1" height="2" fill="#bdbdbd"/><rect x="4" y="60" width="2" height="2" fill="#c4509e"/><rect x="7" y="60" width="14" height="2" fill="#bdbdbd"/><rect x="22" y="60" width="2" height="2" fill="#bdbdbd"/><rect x="25" y="60" width="7" height="2" fill="#6cb4cf"/><rect x="32" y="60" width="1" height="2" fill="#bdbdbd"/><rect x="33" y="60" width="4" height="2" fill="#c6c272"/><rect x="37" y="60" width="1" height="2" fill="#bdbdbd"/><rect x="8" y="63" width="10" height="2" fill="#bdbdbd"/><rect x="18" y="63" width="3" height="2" fill="#3f9bd6"/><rect x="21" y="63" width="1" height="2" fill="#bdbdbd"/><rect x="22" y="63" width="32" height="2" fill="#3cbf6a"/><rect x="54" y="63" width="1" height="2" fill="#bdbdbd"/><rect x="56" y="63" width="15" height="2" fill="#bdbdbd"/><rect x="8" y="66" width="10" height="2" fill="#bdbdbd"/><rect x="18" y="66" width="3" height="2" fill="#3f9bd6"/><rect x="21" y="66" width="1" height="2" fill="#bdbdbd"/><rect x="22" y="66" width="32" height="2" fill="#3cbf6a"/><rect x="54" y="66" width="1" height="2" fill="#bdbdbd"/><rect x="56" y="66" width="15" height="2" fill="#bdbdbd"/><rect x="8" y="69" width="10" height="2" fill="#bdbdbd"/><rect x="18" y="69" width="3" height="2" fill="#3f9bd6"/><rect x="21" y="69" width="1" height="2" fill="#bdbdbd"/><rect x="22" y="69" width="33" height="2" fill="#3cbf6a"/><rect x="55" y="69" width="1" height="2" fill="#bdbdbd"/><rect x="57" y="69" width="15" height="2" fill="#bdbdbd"/><rect x="8" y="72" width="11" height="2" fill="#bdbdbd"/><rect x="19" y="72" width="6" height="2" fill="#3f9bd6"/><rect x="25" y="72" width="1" height="2" fill="#bdbdbd"/><rect x="26" y="72" width="6" height="2" fill="#3cbf6a"/><rect x="32" y="72" width="1" height="2" fill="#bdbdbd"/><rect x="8" y="75" width="8" height="2" fill="#c6c272"/><rect x="17" y="75" width="1" height="2" fill="#bdbdbd"/><rect x="19" y="75" width="14" height="2" fill="#bdbdbd"/><rect x="34" y="75" width="1" height="2" fill="#bdbdbd"/><rect x="36" y="75" width="5" height="2" fill="#bdbdbd"/><rect x="4" y="78" width="2" height="2" fill="#c4509e"/><rect x="7" y="78" width="14" height="2" fill="#bdbdbd"/><rect x="22" y="78" width="2" height="2" fill="#bdbdbd"/><rect x="25" y="78" width="7" height="2" fill="#6cb4cf"/><rect x="32" y="78" width="1" height="2" fill="#bdbdbd"/><rect x="33" y="78" width="4" height="2" fill="#c6c272"/><rect x="37" y="78" width="1" height="2" fill="#bdbdbd"/><rect x="8" y="81" width="11" height="2" fill="#bdbdbd"/><rect x="19" y="81" width="6" height="2" fill="#3f9bd6"/><rect x="25" y="81" width="1" height="2" fill="#bdbdbd"/><rect x="26" y="81" width="6" height="2" fill="#3cbf6a"/><rect x="32" y="81" width="1" height="2" fill="#bdbdbd"/><rect x="8" y="84" width="8" height="2" fill="#c6c272"/><rect x="17" y="84" width="1" height="2" fill="#bdbdbd"/><rect x="19" y="84" width="7" height="2" fill="#6cb4cf"/><rect x="26" y="84" width="1" height="2" fill="#bdbdbd"/><rect x="27" y="84" width="4" height="2" fill="#c6c272"/><rect x="4" y="90" width="2" height="2" fill="#c4509e"/><rect x="7" y="90" width="5" height="2" fill="#6cb4cf"/><rect x="12" y="90" width="1" height="2" fill="#bdbdbd"/><rect x="13" y="90" width="22" height="2" fill="#3f9bd6"/><rect x="35" y="90" width="1" height="2" fill="#bdbdbd"/><rect x="36" y="90" width="10" height="2" fill="#3cbf6a"/><rect x="46" y="90" width="2" height="2" fill="#bdbdbd"/><rect x="8" y="93" width="14" height="2" fill="#bdbdbd"/><rect x="23" y="93" width="1" height="2" fill="#bdbdbd"/><rect x="25" y="93" width="14" height="2" fill="#bdbdbd"/><rect x="39" y="93" width="5" height="2" fill="#c6c272"/><rect x="4" y="99" width="14" height="2" fill="#3f9bd6"/><rect x="18" y="99" width="2" height="2" fill="#bdbdbd"/><rect x="0" y="105" width="4" height="2" fill="#c4509e"/><rect x="5" y="105" width="5" height="2" fill="#3f9bd6"/><rect x="10" y="105" width="3" height="2" fill="#bdbdbd"/><rect x="4" y="108" width="11" height="2" fill="#bdbdbd"/><rect x="15" y="108" width="6" height="2" fill="#3f9bd6"/><rect x="21" y="108" width="1" height="2" fill="#bdbdbd"/><rect x="22" y="108" width="7" height="2" fill="#3cbf6a"/><rect x="29" y="108" width="1" height="2" fill="#bdbdbd"/><rect x="0" y="114" width="4" height="2" fill="#c4509e"/><rect x="5" y="114" width="15" height="2" fill="#3f9bd6"/><rect x="20" y="114" width="3" height="2" fill="#bdbdbd"/><rect x="4" y="117" width="14" height="2" fill="#bdbdbd"/><rect x="19" y="117" width="1" height="2" fill="#bdbdbd"/><rect x="21" y="117" width="14" height="2" fill="#bdbdbd"/><rect x="35" y="117" width="4" height="2" fill="#c6c272"/></svg>
<div style="left:1486px;top:225px;width:6px;height:524px;background:#7a7d87;border-radius:3px;"></div>
<div style="left:1495px;top:37px;width:6px;height:977px;background:#1c1c1c;border-radius:0px;"></div>
<div class="t" style="left:1257px;top:955px;font-size:15px;color:#e0c060;font-weight:bold;">1</div>
<div class="t" style="left:1286px;top:955px;font-size:15px;color:#d0d0d0;font-weight:bold;">100 %</div>
<div class="t" style="left:1367px;top:955px;font-size:15px;color:#d0d0d0;font-weight:bold;">27 :</div>
<div class="t" style="left:1430px;top:955px;font-size:15px;color:#d0d0d0;font-weight:bold;">5</div>
<div class="t" style="left:1456px;top:955px;font-size:15px;color:#d0d0d0;font-weight:bold;">Tabs</div>
<div style="left:1275px;top:942px;width:1px;height:36px;background:#3a3a3a;border-radius:0px;"></div>
<div style="left:1340px;top:942px;width:1px;height:36px;background:#3a3a3a;border-radius:0px;"></div>
<div style="left:1446px;top:942px;width:1px;height:36px;background:#3a3a3a;border-radius:0px;"></div>
<div style="left:0px;top:982px;width:1499px;height:2px;background:#191919;border-radius:0px;"></div>
<div style="left:0px;top:984px;width:1499px;height:30px;background:#252525;border-radius:0px;"></div>
<div class="t" style="left:5px;top:998px;font-size:15px;color:#c0c0c0;font-weight:bold;">FileSystem</div>
<div class="t" style="left:119px;top:998px;font-size:15px;color:#c0c0c0;font-weight:bold;">Output</div>
<div class="t" style="left:185px;top:998px;font-size:15px;color:#c0c0c0;font-weight:bold;">Debugger</div>
<div class="t" style="left:269px;top:998px;font-size:15px;color:#c0c0c0;font-weight:bold;">Audio</div>
<div class="t" style="left:326px;top:998px;font-size:15px;color:#c0c0c0;font-weight:bold;">Animation</div>
<div class="t" style="left:419px;top:998px;font-size:15px;color:#c0c0c0;font-weight:bold;">Shader Editor</div>
<div class="t" style="left:1358px;top:998px;font-size:15px;color:#b0b0b0;font-weight:bold;">4.3.stable.mono</div>
<div style="left:1501px;top:37px;width:388px;height:977px;background:#1e1e1e;border-radius:0px;"></div>
<div style="left:1501px;top:37px;width:67px;height:28px;background:#252525;border-radius:0px;"></div>
<div style="left:1501px;top:37px;width:67px;height:2px;background:#4a8fe7;border-radius:0px;"></div>
<div class="t" style="left:1513px;top:45px;font-size:15px;color:#e0e0e0;font-weight:bold;">Scene</div>
<div class="t" style="left:1580px;top:45px;font-size:15px;color:#6e6e6e;font-weight:bold;">Import</div>
<div style="left:1501px;top:65px;width:388px;height:463px;background:#252525;border-radius:0px;"></div>
<div style="left:1561px;top:71px;width:266px;height:23px;background:#1a1a1a;border-radius:4px;"></div>
<div class="t" style="left:1568px;top:77px;font-size:15px;color:#616161;font-weight:bold;">Filter: name, t:type, g:gr</div>
<div style="left:1533px;top:123px;width:325px;height:22px;background:#353535;border-radius:4px;"></div>
<div class="t" style="left:1545px;top:106px;font-size:15px;color:#c8c8c8;font-weight:bold;">Player</div>
<div class="t" style="left:1556px;top:128px;font-size:15px;color:#ffffff;font-weight:bold;">Sprite2D</div>
<div class="t" style="left:1556px;top:150px;font-size:15px;color:#c8c8c8;font-weight:bold;">CollisionShape2D</div>
<div class="t" style="left:1556px;top:172px;font-size:15px;color:#c8c8c8;font-weight:bold;">Camera2D</div>
<div class="t" style="left:1556px;top:194px;font-size:15px;color:#c8c8c8;font-weight:bold;">anim</div>
<div class="t" style="left:1556px;top:216px;font-size:15px;color:#c8c8c8;font-weight:bold;">AnimationTree</div>
<div class="t" style="left:1556px;top:238px;font-size:15px;color:#c8c8c8;font-weight:bold;">sword</div>
<div class="t" style="left:1568px;top:260px;font-size:15px;color:#c8c8c8;font-weight:bold;">CollisionShape2D</div>
<div style="left:1501px;top:530px;width:103px;height:2px;background:#4a8fe7;border-radius:0px;"></div>
<div style="left:1501px;top:532px;width:103px;height:26px;background:#252525;border-radius:0px;"></div>
<div class="t" style="left:1513px;top:538px;font-size:15px;color:#e0e0e0;font-weight:bold;">Inspector</div>
<div class="t" style="left:1615px;top:538px;font-size:15px;color:#6c6c6c;font-weight:bold;">Node</div>
<div class="t" style="left:1673px;top:538px;font-size:15px;color:#6c6c6c;font-weight:bold;">History</div>
<div style="left:1501px;top:558px;width:388px;height:456px;background:#252525;border-radius:0px;"></div>
<div style="left:1505px;top:590px;width:351px;height:28px;background:#333333;border-radius:4px;"></div>
<div class="t" style="left:1531px;top:599px;font-size:15px;color:#d8d8d8;font-weight:bold;">Sprite2D</div>
<div style="left:1505px;top:620px;width:351px;height:24px;background:#1a1a1a;border-radius:4px;"></div>
<div class="t" style="left:1512px;top:627px;font-size:15px;color:#616161;font-weight:bold;">Filter Properties</div>
<div style="left:1509px;top:650px;width:359px;height:29px;background:#2e2e2e;border-radius:4px;"></div>
<div class="t" style="left:1663px;top:658px;font-size:15px;color:#d8d8d8;font-weight:bold;">Sprite2D</div>
<div class="t" style="left:1518px;top:707px;font-size:15px;color:#c4c4c4;font-weight:bold;">Texture</div>
<div style="left:1689px;top:682px;width:153px;height:64px;background:#1a1a1a;border-radius:4px;"></div>
<div style="left:1842px;top:682px;width:25px;height:64px;background:#2a2a2a;border-radius:6px;border:1px solid #333;box-sizing:border-box"></div>
<div class="t" style="left:1527px;top:753px;font-size:15px;color:#e0e0e0;font-weight:bold;">Offset</div>
<div class="t" style="left:1526px;top:777px;font-size:15px;color:#e0e0e0;font-weight:bold;">Animation</div>
<div style="left:1696px;top:794px;width:172px;height:23px;background:#1a1a1a;border-radius:4px;"></div>
<div class="t" style="left:1529px;top:799px;font-size:15px;color:#bdbdbd;font-weight:bold;">Hframes</div>
<div class="t" style="left:1713px;top:799px;font-size:15px;color:#d8d8d8;font-weight:bold;">12</div>
<div style="left:1696px;top:820px;width:172px;height:23px;background:#1a1a1a;border-radius:4px;"></div>
<div class="t" style="left:1529px;top:825px;font-size:15px;color:#bdbdbd;font-weight:bold;">Vframes</div>
<div class="t" style="left:1713px;top:825px;font-size:15px;color:#d8d8d8;font-weight:bold;">9</div>
<div style="left:1696px;top:846px;width:172px;height:23px;background:#1a1a1a;border-radius:4px;"></div>
<div class="t" style="left:1529px;top:851px;font-size:15px;color:#bdbdbd;font-weight:bold;">Frame</div>
<div class="t" style="left:1713px;top:851px;font-size:15px;color:#d8d8d8;font-weight:bold;">42</div>
<div class="t" style="left:1529px;top:877px;font-size:15px;color:#bdbdbd;font-weight:bold;">Frame Coords</div>
<div style="left:1696px;top:872px;width:172px;height:23px;background:#1a1a1a;border-radius:4px;"></div>
<div style="left:1696px;top:898px;width:172px;height:23px;background:#1a1a1a;border-radius:4px;"></div>
<div style="left:1696px;top:872px;width:22px;height:23px;background:#171717;border-radius:4px;"></div>
<div style="left:1696px;top:898px;width:22px;height:23px;background:#171717;border-radius:4px;"></div>
<div class="t" style="left:1702px;top:877px;font-size:15px;color:#b4687a;font-weight:bold;">x</div>
<div class="t" style="left:1702px;top:903px;font-size:15px;color:#6fae7a;font-weight:bold;">y</div>
<div class="t" style="left:1721px;top:877px;font-size:15px;color:#d8d8d8;font-weight:bold;">6</div>
<div class="t" style="left:1721px;top:903px;font-size:15px;color:#d8d8d8;font-weight:bold;">3</div>
<div class="t" style="left:1526px;top:928px;font-size:15px;color:#e0e0e0;font-weight:bold;">Region</div>
<div style="left:1509px;top:949px;width:359px;height:29px;background:#2e2e2e;border-radius:4px;"></div>
<div class="t" style="left:1672px;top:957px;font-size:15px;color:#d8d8d8;font-weight:bold;">Node2D</div>
<div class="t" style="left:1526px;top:985px;font-size:15px;color:#e0e0e0;font-weight:bold;">Transform</div>
<div style="left:1509px;top:1005px;width:359px;height:29px;background:#2e2e2e;border-radius:4px;"></div>
<div class="t" style="left:1663px;top:1013px;font-size:15px;color:#d8d8d8;font-weight:bold;">CanvasItem</div>
<svg style="left:786px;top:11px" width="14" height="14" viewBox="0 0 14 14"><path d="M3 12V3.2H11" fill="none" stroke="#b8b8b8" stroke-width="2"/><path d="M0 10.5H6L3 14Z M10.5 0V6.4L14 3.2Z" fill="#b8b8b8"/></svg>
<svg style="left:841px;top:11px" width="14" height="14" viewBox="0 0 14 14"><path d="M3 3V11.5H11M3 11.5L11.5 3" fill="none" stroke="#b8b8b8" stroke-width="2"/><path d="M0 4L3 0L6 4Z M10.5 8.5L14 11.5L10.5 14.5Z M7.5 2.5H12.5V7.5Z" fill="#b8b8b8"/></svg>
<svg style="left:896px;top:11px" width="15" height="14" viewBox="0 0 15 14"><path d="M5 1H13Q15 1 15 3V5H11V11Q11 14 8 14H1Q0 14 0 13V10H3V3Q3 1 5 1Z" fill="#5aa0ff"/><path d="M11 1Q9.5 1 9.5 3V5" fill="none" stroke="#2f6fcf" stroke-width="1"/></svg>
<svg style="left:992px;top:11px" width="15" height="14" viewBox="0 0 15 14"><path d="M7.5 0V8.5M3.5 5L7.5 9L11.5 5M1 8V13H14V8" fill="none" stroke="#b8b8b8" stroke-width="2"/></svg>
<svg style="left:1586px;top:12px" width="10" height="11" viewBox="0 0 10 11"><path d="M0 0L10 5.5L0 11Z" fill="#b8b8b8"/></svg>
<svg style="left:1616px;top:13px" width="10" height="10" viewBox="0 0 10 10"><rect x="0" y="0" width="3.5" height="10" rx="1" fill="#6a6a6a"/><rect x="6.5" y="0" width="3.5" height="10" rx="1" fill="#6a6a6a"/></svg>
<svg style="left:1646px;top:13px" width="10" height="10" viewBox="0 0 10 10"><rect x="0" y="0" width="10" height="10" rx="1" fill="#6a6a6a"/></svg>
<svg style="left:1674px;top:12px" width="14" height="13" viewBox="0 0 14 13"><rect x="0" y="0" width="14" height="9" rx="2" fill="#6a6a6a"/><path d="M5 2V7L9.5 4.5Z" fill="#1c1c1c"/><path d="M7 9V11.5M2 12H12" stroke="#6a6a6a" stroke-width="1.6"/></svg>
<svg style="left:1704px;top:12px" width="14" height="13" viewBox="0 0 14 13"><path d="M0 2.5L1.7 2.1L1.9 3.2L0.2 3.6Z M3.2 1.7L5 1.3L5.2 2.4L3.4 2.8Z M6.6 1L8.4 .6L8.6 1.7L6.8 2.1Z M10 .4L12 0L12.2 1.1L10.2 1.5Z" fill="#b8b8b8"/><rect x="0" y="4.5" width="14" height="8.5" rx="1" fill="#b8b8b8"/><path d="M5 6.2V11.5L9.5 8.8Z" fill="#1c1c1c"/></svg>
<svg style="left:1734px;top:12px" width="14" height="13" viewBox="0 0 14 13"><path d="M0 2.5L1.7 2.1L1.9 3.2L0.2 3.6Z M3.2 1.7L5 1.3L5.2 2.4L3.4 2.8Z M6.6 1L8.4 .6L8.6 1.7L6.8 2.1Z M10 .4L12 0L12.2 1.1L10.2 1.5Z" fill="#b8b8b8"/><rect x="0" y="4.5" width="14" height="8.5" rx="1" fill="#b8b8b8"/><path d="M3 7H6L7 8H11V11H3Z" fill="#1c1c1c"/></svg>
<svg style="left:1765px;top:12px" width="14" height="14" viewBox="0 0 14 14"><circle cx="6.5" cy="6.5" r="6.3" fill="#b8b8b8"/><g fill="#1c1c1c"><circle cx="6.5" cy="2.6" r="1.5"/><circle cx="6.5" cy="10.4" r="1.5"/><circle cx="2.6" cy="6.5" r="1.5"/><circle cx="10.4" cy="6.5" r="1.5"/><circle cx="6.5" cy="6.5" r=".7"/></g><path d="M10.5 11.5L13 13.5" stroke="#b8b8b8" stroke-width="1.5"/></svg>
<svg style="left:1873px;top:14px" width="11" height="7" viewBox="0 0 11 7"><path d="M1 1L5.5 5.5L10 1" fill="none" stroke="#8ed466" stroke-width="1.8"/></svg>
<svg style="left:8px;top:44px" width="14" height="14" viewBox="0 0 14 14"><rect x="4.5" y="0" width="6.1" height="4.9" rx="1.3" fill="#6c9cff"/><rect x="4.9" y="2.1" width="2" height="1.6" fill="#3e5ca8"/><path d="M7.3 4.5V9.8M2.2 4.6L3.6 7.9L7 7.3M7 6.8H11.3L12.7 8.8M7.6 9.4L1.2 13.2M8.3 8.6L9.5 12.9L12.7 12" fill="none" stroke="#6c9cff" stroke-width="2.1" stroke-linecap="round" stroke-linejoin="round"/></svg>
<svg style="left:94px;top:46px" width="11" height="11" viewBox="0 0 11 11"><path d="M1 1L10 10M10 1L1 10" stroke="#e8e8e8" stroke-width="1.9"/></svg>
<svg style="left:129px;top:44px" width="14" height="14" viewBox="0 0 14 14"><path d="M7 0.5V13.5M0.5 7H13.5" stroke="#8a8a8a" stroke-width="1.6"/></svg>
<svg style="left:1478px;top:44px" width="15" height="15" viewBox="0 0 15 15"><path d="M1 5V1H5M1 1L5 5M10 1H14V5M14 1L10 5M1 10V14H5M1 14L5 10M14 10V14H10M14 14L10 10" fill="none" stroke="#b8b8b8" stroke-width="1.7"/></svg>
<svg style="left:1152px;top:76px" width="14" height="14" viewBox="0 0 14 14"><path d="M6 1.5H3Q1 1.5 1 3.5V11Q1 13 3 13H10.5Q12.5 13 12.5 11V8" fill="none" stroke="#b8b8b8" stroke-width="2"/><path d="M6 8L12 2M8 1H13V6" fill="none" stroke="#b8b8b8" stroke-width="2"/></svg>
<svg style="left:1284px;top:75px" width="16" height="16" viewBox="0 0 16 16"><circle cx="9" cy="4.5" r="3" fill="none" stroke="#b8b8b8" stroke-width="1.8"/><path d="M7 6.7L4.5 9" stroke="#b8b8b8" stroke-width="1.8"/><text x="8" y="16" font-family="Liberation Sans" font-weight="bold" font-size="6.5" fill="#b8b8b8" text-anchor="middle">DOC</text></svg>
<svg style="left:1424px;top:76px" width="7" height="14" viewBox="0 0 7 14"><path d="M6 1L1.2 7L6 13" fill="none" stroke="#c4c4c4" stroke-width="1.5"/></svg>
<svg style="left:1445px;top:76px" width="7" height="14" viewBox="0 0 7 14"><path d="M1 1L5.8 7L1 13" fill="none" stroke="#8a8a8a" stroke-width="1.5"/></svg>
<svg style="left:1474px;top:76px" width="14" height="14" viewBox="0 0 14 14"><rect x="0" y="4" width="11" height="10" rx="2" fill="#8a8a8a"/><rect x="3" y="0" width="11" height="10" rx="2" fill="#c8c8c8"/><rect x="3" y="1.6" width="11" height="0.9" fill="#232323"/></svg>
<svg style="left:128px;top:104px" width="14" height="14" viewBox="0 0 14 14"><circle cx="5.5" cy="5.5" r="4.2" fill="none" stroke="#d8d8d8" stroke-width="1.9"/><path d="M8.5 8.5L13 13" stroke="#d8d8d8" stroke-width="2.2"/></svg>
<svg style="left:8px;top:132px" width="14" height="14" viewBox="0 0 14 14"><path d="M7 0.5L8.3 2.6L10.8 1.8L11 4.3L13.4 5L12 7L13.4 9L11 9.7L10.8 12.2L8.3 11.4L7 13.5L5.7 11.4L3.2 12.2L3 9.7L0.6 9L2 7L0.6 5L3 4.3L3.2 1.8L5.7 2.6Z" fill="#e0e0e0"/><circle cx="7" cy="7" r="2.3" fill="#2c2c2c"/></svg>
<svg style="left:128px;top:544px" width="15" height="14" viewBox="0 0 15 14"><path d="M3.5 1V13" stroke="#b8b8b8" stroke-width="2"/><path d="M0.5 4L3.5 0.5L6.5 4Z M0.5 10L3.5 13.5L6.5 10Z" fill="#b8b8b8"/><path d="M9 1.5H15M9 5.5H13M9 9.5H11M9 13H10.5" stroke="#b8b8b8" stroke-width="1.6"/></svg>
<svg style="left:128px;top:570px" width="14" height="14" viewBox="0 0 14 14"><circle cx="5.5" cy="5.5" r="4.2" fill="none" stroke="#d8d8d8" stroke-width="1.9"/><path d="M8.5 8.5L13 13" stroke="#d8d8d8" stroke-width="2.2"/></svg>
<svg style="left:196px;top:234px" width="18" height="18" viewBox="0 0 18 18"><rect x="0.6" y="13.9" width="10.5" height="3.6" rx="0.6" fill="#10aef5"/><path d="M6 14V10Q6 7.1 9 7.1H12.5" fill="none" stroke="#10aef5" stroke-width="3"/><path d="M11.1 1.6L17.8 6.5L11.1 11.6Z" fill="#10aef5"/></svg>
<svg style="left:159px;top:953px" width="7" height="14" viewBox="0 0 7 14"><path d="M6 1L1.2 7L6 13" fill="none" stroke="#c4c4c4" stroke-width="1.5"/></svg>
<svg style="left:1238px;top:953px" width="15" height="13" viewBox="0 0 15 13"><path d="M7.5 0.5L14.5 12.5H0.5Z" fill="#d4c21a" stroke="#d4c21a" stroke-linejoin="round"/><rect x="6.6" y="4" width="1.8" height="5" fill="#232323"/><rect x="6.6" y="10" width="1.8" height="1.6" fill="#232323"/></svg>
<svg style="left:107px;top:1000px" width="8" height="8" viewBox="0 0 8 8"><circle cx="4" cy="4" r="3.7" fill="#d8c81a"/></svg>
<svg style="left:1337px;top:995px" width="13" height="14" viewBox="0 0 13 14"><path d="M6.5 1Q11 1 11 6V10L12.5 12H0.5L2 10V6Q2 1 6.5 1Z M5 12.5Q6.5 14.5 8 12.5" fill="#555"/></svg>
<svg style="left:1511px;top:76px" width="14" height="14" viewBox="0 0 14 14"><path d="M7 0.5V13.5M0.5 7H13.5" stroke="#e0e0e0" stroke-width="1.8"/></svg>
<svg style="left:1539px;top:76px" width="14" height="14" viewBox="0 0 14 14"><path d="M5.5 8.5L8.5 5.5" stroke="#b8b8b8" stroke-width="1.8"/><path d="M6.8 3.6L8.6 1.8Q10.3 .3 12 1.9Q13.6 3.6 12.1 5.3L10.3 7.1 M7.1 10.4L5.3 12.2Q3.6 13.7 1.9 12.1Q.3 10.4 1.8 8.7L3.6 6.9" fill="none" stroke="#b8b8b8" stroke-width="1.8"/></svg>
<svg style="left:1806px;top:76px" width="14" height="14" viewBox="0 0 14 14"><circle cx="5.5" cy="5.5" r="4.2" fill="none" stroke="#d8d8d8" stroke-width="1.9"/><path d="M8.5 8.5L13 13" stroke="#d8d8d8" stroke-width="2.2"/></svg>
<svg style="left:1836px;top:76px" width="15" height="15" viewBox="0 0 15 15"><path d="M4 1H12.5Q14 1 14 2.5V4H11V7" fill="none" stroke="#9a9a9a" stroke-width="0"/><path d="M4.5 0.5H12.5Q14.5 0.5 14.5 2.5V4H10.5V11Q10.5 14 7.5 14H1Q0 14 0 13V10.5H2.5V2.5Q2.5 0.5 4.5 0.5Z" fill="#9a9a9a"/><path d="M11 7.5V14.5M7.5 11H14.5" stroke="#3ec93e" stroke-width="2.2"/></svg>
<svg style="left:1868px;top:75px" width="5" height="16" viewBox="0 0 5 16"><circle cx="2.2" cy="2" r="1.9" fill="#a0a0a0"/><circle cx="2.2" cy="8" r="1.9" fill="#a0a0a0"/><circle cx="2.2" cy="14" r="1.9" fill="#a0a0a0"/></svg>
<svg style="left:1877px;top:43px" width="5" height="16" viewBox="0 0 5 16"><circle cx="2.2" cy="2" r="1.9" fill="#a0a0a0"/><circle cx="2.2" cy="8" r="1.9" fill="#a0a0a0"/><circle cx="2.2" cy="14" r="1.9" fill="#a0a0a0"/></svg>
<svg style="left:1877px;top:536px" width="5" height="16" viewBox="0 0 5 16"><circle cx="2.2" cy="2" r="1.9" fill="#a0a0a0"/><circle cx="2.2" cy="8" r="1.9" fill="#a0a0a0"/><circle cx="2.2" cy="14" r="1.9" fill="#a0a0a0"/></svg>
<svg style="left:1511px;top:110px" width="9" height="6" viewBox="0 0 9 6"><path d="M1 1L4.5 4.6L8 1" fill="none" stroke="#7a7a7a" stroke-width="1.7"/></svg>
<svg style="left:1523px;top:241px" width="9" height="6" viewBox="0 0 9 6"><path d="M1 1L4.5 4.6L8 1" fill="none" stroke="#7a7a7a" stroke-width="1.7"/></svg>
<svg style="left:1523px;top:105px" width="14" height="14" viewBox="0 0 14 14"><rect x="4.5" y="0" width="6.1" height="4.9" rx="1.3" fill="#6c9cff"/><rect x="4.9" y="2.1" width="2" height="1.6" fill="#3e5ca8"/><path d="M7.3 4.5V9.8M2.2 4.6L3.6 7.9L7 7.3M7 6.8H11.3L12.7 8.8M7.6 9.4L1.2 13.2M8.3 8.6L9.5 12.9L12.7 12" fill="none" stroke="#6c9cff" stroke-width="2.1" stroke-linecap="round" stroke-linejoin="round"/></svg>
<svg style="left:1535px;top:127px" width="14" height="14" viewBox="0 0 14 14"><rect x="0" y="0" width="14" height="14" rx="3.5" fill="#6c9cff"/><rect x="2.1" y="5" width="2" height="4" rx="0.8" fill="#2a2620"/><rect x="10" y="5" width="2" height="4" rx="0.8" fill="#2a2620"/><path d="M4.2 10.4Q7 13.6 9.8 10.4" fill="none" stroke="#2a2620" stroke-width="1.6"/></svg>
<svg style="left:1535px;top:149px" width="14" height="14" viewBox="0 0 14 14"><rect x="1" y="1" width="12" height="12" fill="none" stroke="#6c9cff" stroke-width="2"/></svg>
<svg style="left:1547px;top:259px" width="14" height="14" viewBox="0 0 14 14"><rect x="1" y="1" width="12" height="12" fill="none" stroke="#6c9cff" stroke-width="2"/></svg>
<svg style="left:1534px;top:171px" width="15" height="13" viewBox="0 0 15 13"><circle cx="5.5" cy="6" r="3.7" fill="#6c9cff"/><circle cx="9" cy="4" r="3.3" fill="#6c9cff"/><rect x="3" y="6" width="9" height="6.5" rx="0.8" fill="#6c9cff"/><path d="M10.5 9L14.5 6V12.5Z" fill="#6c9cff"/></svg>
<svg style="left:1535px;top:193px" width="15" height="15" viewBox="0 0 15 15"><rect x="0" y="0" width="14.3" height="14.5" fill="#c25bff"/><g fill="#252525"><rect x="1.5" y="0" width="2" height="2"/><rect x="1.5" y="3.6" width="2" height="2"/><rect x="1.5" y="6.6" width="2" height="2"/><rect x="1.5" y="9.8" width="2" height="2"/><rect x="1.5" y="12.6" width="2" height="2"/><rect x="10.8" y="0" width="2" height="2"/><rect x="10.8" y="3.6" width="2" height="2"/><rect x="10.8" y="6.6" width="2" height="2"/><rect x="10.8" y="9.8" width="2" height="2"/><rect x="10.8" y="12.6" width="2" height="2"/></g></svg>
<svg style="left:1535px;top:215px" width="15" height="15" viewBox="0 0 15 15"><rect x="0" y="0" width="14.3" height="14.5" fill="#c25bff"/><g fill="#252525"><rect x="1.5" y="0" width="2" height="2"/><rect x="1.5" y="3.6" width="2" height="2"/><rect x="1.5" y="6.6" width="2" height="2"/><rect x="1.5" y="9.8" width="2" height="2"/><rect x="1.5" y="12.6" width="2" height="2"/><rect x="10.8" y="0" width="2" height="2"/><rect x="10.8" y="3.6" width="2" height="2"/><rect x="10.8" y="6.6" width="2" height="2"/><rect x="10.8" y="9.8" width="2" height="2"/><rect x="10.8" y="12.6" width="2" height="2"/></g><path d="M4.5 3.5H7V7.5H9.5V11H7" fill="none" stroke="#252525" stroke-width="1.8"/></svg>
<svg style="left:1535px;top:237px" width="14" height="14" viewBox="0 0 14 14"><path d="M1 4V1H4M10 1H13V4M13 10V13H10M4 13H1V10" fill="none" stroke="#6c9cff" stroke-width="2"/><rect x="4.5" y="4.5" width="5" height="5" fill="none" stroke="#6c9cff" stroke-width="2"/></svg>
<svg style="left:1862px;top:106px" width="14" height="12" viewBox="0 0 14 12"><path d="M0 6Q2.5 0 7 0Q11.5 0 14 6Q11.5 12 7 12Q2.5 12 0 6Z" fill="#e0e0e0"/><circle cx="7" cy="6" r="4" fill="#202020"/><circle cx="7" cy="6" r="2.1" fill="#e0e0e0"/></svg>
<svg style="left:1862px;top:128px" width="14" height="12" viewBox="0 0 14 12"><path d="M0 6Q2.5 0 7 0Q11.5 0 14 6Q11.5 12 7 12Q2.5 12 0 6Z" fill="#e0e0e0"/><circle cx="7" cy="6" r="4" fill="#202020"/><circle cx="7" cy="6" r="2.1" fill="#e0e0e0"/></svg>
<svg style="left:1862px;top:150px" width="14" height="12" viewBox="0 0 14 12"><path d="M0 6Q2.5 0 7 0Q11.5 0 14 6Q11.5 12 7 12Q2.5 12 0 6Z" fill="#e0e0e0"/><circle cx="7" cy="6" r="4" fill="#202020"/><circle cx="7" cy="6" r="2.1" fill="#e0e0e0"/></svg>
<svg style="left:1862px;top:172px" width="14" height="12" viewBox="0 0 14 12"><path d="M0 6Q2.5 0 7 0Q11.5 0 14 6Q11.5 12 7 12Q2.5 12 0 6Z" fill="#e0e0e0"/><circle cx="7" cy="6" r="4" fill="#202020"/><circle cx="7" cy="6" r="2.1" fill="#e0e0e0"/></svg>
<svg style="left:1862px;top:238px" width="14" height="12" viewBox="0 0 14 12"><path d="M0 6Q2.5 0 7 0Q11.5 0 14 6Q11.5 12 7 12Q2.5 12 0 6Z" fill="#e0e0e0"/><circle cx="7" cy="6" r="4" fill="#202020"/><circle cx="7" cy="6" r="2.1" fill="#e0e0e0"/></svg>
<svg style="left:1862px;top:260px" width="14" height="12" viewBox="0 0 14 12"><path d="M0 6Q2.5 0 7 0Q11.5 0 14 6Q11.5 12 7 12Q2.5 12 0 6Z" fill="#e0e0e0"/><circle cx="7" cy="6" r="4" fill="#202020"/><circle cx="7" cy="6" r="2.1" fill="#e0e0e0"/></svg>
<svg style="left:1840px;top:105px" width="14" height="14" viewBox="0 0 14 14"><path d="M4.5 0.5H12Q14 0.5 14 2.5V4H10.5V11Q10.5 14 7.5 14H1Q0 14 0 13V10.5H2.5V2.5Q2.5 0.5 4.5 0.5Z" fill="#e0e0e0"/><path d="M10.5 0.8Q9 1 9 3" fill="none" stroke="#999" stroke-width="0.8"/></svg>
<svg style="left:1512px;top:569px" width="14" height="15" viewBox="0 0 14 15"><path d="M0 0H7L10 3V8H7V15H0Z" fill="#c8c8c8"/><path d="M7 0V3H10" fill="#888"/><path d="M10.5 8.5V15M7.3 11.8H13.8" stroke="#3ec93e" stroke-width="2.2"/></svg>
<svg style="left:1538px;top:569px" width="15" height="14" viewBox="0 0 15 14"><path d="M0.5 3Q0.5 1 2.5 1H5L6.5 2.5H12V5H4L1 13Q.5 13 .5 12Z" fill="none" stroke="#c0c0c0" stroke-width="1"/><path d="M3.5 5.5H14.5L12.5 14H1Z" fill="#b8b8b8"/></svg>
<svg style="left:1567px;top:569px" width="14" height="14" viewBox="0 0 14 14"><path d="M0 1.5Q0 0 1.5 0H10.5L14 3.5V12.5Q14 14 12.5 14H1.5Q0 14 0 12.5Z" fill="#6e6e6e"/><rect x="3" y="0" width="6" height="4.2" fill="#252525"/><rect x="6.5" y="0.5" width="1.5" height="3" fill="#6e6e6e"/><circle cx="7" cy="9.5" r="1.6" fill="#252525"/></svg>
<svg style="left:1600px;top:568px" width="5" height="16" viewBox="0 0 5 16"><circle cx="2.2" cy="2" r="1.9" fill="#c0c0c0"/><circle cx="2.2" cy="8" r="1.9" fill="#c0c0c0"/><circle cx="2.2" cy="14" r="1.9" fill="#c0c0c0"/></svg>
<svg style="left:1821px;top:569px" width="7" height="14" viewBox="0 0 7 14"><path d="M6 1L1.2 7L6 13" fill="none" stroke="#c4c4c4" stroke-width="1.5"/></svg>
<svg style="left:1842px;top:569px" width="7" height="14" viewBox="0 0 7 14"><path d="M1 1L5.8 7L1 13" fill="none" stroke="#7a7a7a" stroke-width="1.5"/></svg>
<svg style="left:1864px;top:569px" width="15" height="14" viewBox="0 0 15 14"><path d="M3 8A5.5 5.5 0 1 1 5 11.5" fill="none" stroke="#b8b8b8" stroke-width="1.8"/><path d="M0 6.5L3.2 10L6 6.5Z" fill="#b8b8b8"/><path d="M8.5 4.5V8L10.5 9.5" fill="none" stroke="#b8b8b8" stroke-width="1.6"/></svg>
<svg style="left:1510px;top:597px" width="14" height="14" viewBox="0 0 14 14"><rect x="0" y="0" width="14" height="14" rx="3.5" fill="#6c9cff"/><rect x="2.1" y="5" width="2" height="4" rx="0.8" fill="#2a2620"/><rect x="10" y="5" width="2" height="4" rx="0.8" fill="#2a2620"/><path d="M4.2 10.4Q7 13.6 9.8 10.4" fill="none" stroke="#2a2620" stroke-width="1.6"/></svg>
<svg style="left:1642px;top:658px" width="14" height="14" viewBox="0 0 14 14"><rect x="0" y="0" width="14" height="14" rx="3.5" fill="#6c9cff"/><rect x="2.1" y="5" width="2" height="4" rx="0.8" fill="#2a2620"/><rect x="10" y="5" width="2" height="4" rx="0.8" fill="#2a2620"/><path d="M4.2 10.4Q7 13.6 9.8 10.4" fill="none" stroke="#2a2620" stroke-width="1.6"/></svg>
<svg style="left:1839px;top:600px" width="11" height="7" viewBox="0 0 11 7"><path d="M1 1L5.5 5.5L10 1" fill="none" stroke="#e0e0e0" stroke-width="1.8"/></svg>
<svg style="left:1863px;top:596px" width="16" height="16" viewBox="0 0 16 16"><circle cx="9" cy="4.5" r="3" fill="none" stroke="#b8b8b8" stroke-width="1.8"/><path d="M7 6.7L4.5 9" stroke="#b8b8b8" stroke-width="1.8"/><text x="8" y="16" font-family="Liberation Sans" font-weight="bold" font-size="6.5" fill="#b8b8b8" text-anchor="middle">DOC</text></svg>
<svg style="left:1833px;top:625px" width="14" height="14" viewBox="0 0 14 14"><circle cx="5.5" cy="5.5" r="4.2" fill="none" stroke="#d8d8d8" stroke-width="1.9"/><path d="M8.5 8.5L13 13" stroke="#d8d8d8" stroke-width="2.2"/></svg>
<svg style="left:1865px;top:624px" width="13" height="15" viewBox="0 0 13 15"><path d="M3 0V6M3 9V15M10 0V4M10 7V15" stroke="#b8b8b8" stroke-width="1.8"/><rect x="0.5" y="6" width="5" height="3" fill="#b8b8b8"/><rect x="7.5" y="4" width="5" height="3" fill="#b8b8b8"/></svg>
<svg style="left:1665px;top:707px" width="15" height="14" viewBox="0 0 15 14"><path d="M2.8 7.5A5.2 5.2 0 1 1 6 12.2" fill="none" stroke="#e0e0e0" stroke-width="1.9"/><path d="M0 6.2H5.6L2.8 10.2Z" fill="#e0e0e0"/></svg>
<svg style="left:1672px;top:799px" width="15" height="14" viewBox="0 0 15 14"><path d="M2.8 7.5A5.2 5.2 0 1 1 6 12.2" fill="none" stroke="#e0e0e0" stroke-width="1.9"/><path d="M0 6.2H5.6L2.8 10.2Z" fill="#e0e0e0"/></svg>
<svg style="left:1672px;top:825px" width="15" height="14" viewBox="0 0 15 14"><path d="M2.8 7.5A5.2 5.2 0 1 1 6 12.2" fill="none" stroke="#e0e0e0" stroke-width="1.9"/><path d="M0 6.2H5.6L2.8 10.2Z" fill="#e0e0e0"/></svg>
<svg style="left:1672px;top:851px" width="15" height="14" viewBox="0 0 15 14"><path d="M2.8 7.5A5.2 5.2 0 1 1 6 12.2" fill="none" stroke="#e0e0e0" stroke-width="1.9"/><path d="M0 6.2H5.6L2.8 10.2Z" fill="#e0e0e0"/></svg>
<svg style="left:1672px;top:877px" width="15" height="14" viewBox="0 0 15 14"><path d="M2.8 7.5A5.2 5.2 0 1 1 6 12.2" fill="none" stroke="#e0e0e0" stroke-width="1.9"/><path d="M0 6.2H5.6L2.8 10.2Z" fill="#e0e0e0"/></svg>
<svg style="left:1696px;top:706px" width="14" height="15" viewBox="0 0 14 15"><rect x="0" y="0.5" width="9" height="14" fill="#c0c0c0"/><g fill="#c0c0c0"><rect x="9" y="0.5" width="2.5" height="2.5"/><rect x="11.5" y="3" width="2.5" height="2.5"/><rect x="9" y="5.5" width="2.5" height="2.5"/><rect x="11.5" y="8" width="2.5" height="2.5"/><rect x="9" y="10.5" width="2.5" height="2.5"/><rect x="11.5" y="13" width="2.5" height="1.5"/></g><path d="M2 10.5L8 4.5V10.5Z" fill="#1a1a1a"/><rect x="1.5" y="2" width="7" height="2" fill="#1a1a1a" opacity="0"/></svg>
<svg style="left:1849px;top:711px" width="11" height="7" viewBox="0 0 11 7"><path d="M1 1L5.5 5.5L10 1" fill="none" stroke="#9a9a9a" stroke-width="1.6"/></svg>
<svg style="left:1515px;top:754px" width="6" height="9" viewBox="0 0 6 9"><path d="M1 1L4.6 4.5L1 8" fill="none" stroke="#a0a0a0" stroke-width="1.6"/></svg>
<svg style="left:1515px;top:930px" width="6" height="9" viewBox="0 0 6 9"><path d="M1 1L4.6 4.5L1 8" fill="none" stroke="#a0a0a0" stroke-width="1.6"/></svg>
<svg style="left:1515px;top:986px" width="6" height="9" viewBox="0 0 6 9"><path d="M1 1L4.6 4.5L1 8" fill="none" stroke="#a0a0a0" stroke-width="1.6"/></svg>
<svg style="left:1513px;top:780px" width="9" height="6" viewBox="0 0 9 6"><path d="M1 1L4.5 4.6L8 1" fill="none" stroke="#a0a0a0" stroke-width="1.6"/></svg>
<svg style="left:1848px;top:799px" width="11" height="14" viewBox="0 0 11 14"><path d="M1.5 5L5.5 1.5L9.5 5M1.5 9L5.5 12.5L9.5 9" fill="none" stroke="#d0d0d0" stroke-width="1.6"/></svg>
<svg style="left:1848px;top:825px" width="11" height="14" viewBox="0 0 11 14"><path d="M1.5 5L5.5 1.5L9.5 5M1.5 9L5.5 12.5L9.5 9" fill="none" stroke="#d0d0d0" stroke-width="1.6"/></svg>
<svg style="left:1848px;top:851px" width="11" height="14" viewBox="0 0 11 14"><path d="M1.5 5L5.5 1.5L9.5 5M1.5 9L5.5 12.5L9.5 9" fill="none" stroke="#d0d0d0" stroke-width="1.6"/></svg>
<svg style="left:1848px;top:877px" width="11" height="14" viewBox="0 0 11 14"><path d="M1.5 5L5.5 1.5L9.5 5M1.5 9L5.5 12.5L9.5 9" fill="none" stroke="#d0d0d0" stroke-width="1.6"/></svg>
<svg style="left:1848px;top:903px" width="11" height="14" viewBox="0 0 11 14"><path d="M1.5 5L5.5 1.5L9.5 5M1.5 9L5.5 12.5L9.5 9" fill="none" stroke="#d0d0d0" stroke-width="1.6"/></svg>
<svg style="left:1652px;top:957px" width="13" height="13" viewBox="0 0 13 13"><circle cx="6.5" cy="6.5" r="5.3" fill="none" stroke="#6c9cff" stroke-width="2"/></svg>
<svg style="left:1740px;top:685px" width="80" height="62" viewBox="0 0 80 62"><rect x="0.5" y="0.5" width="3" height="2" fill="#eeeeee"/><rect x="7.1" y="0.5" width="2" height="1" fill="#cccccc"/><rect x="13.7" y="0.5" width="2" height="1" fill="#ffffff"/><rect x="20.3" y="0.5" width="1" height="2" fill="#f4f4f4"/><rect x="26.9" y="0.5" width="3" height="2" fill="#ffffff"/><rect x="33.5" y="0.5" width="2" height="2" fill="#cccccc"/><rect x="40.1" y="0.5" width="1" height="1" fill="#eeeeee"/><rect x="46.7" y="0.5" width="1" height="2" fill="#d8d8d8"/><rect x="53.3" y="0.5" width="2" height="2" fill="#cccccc"/><rect x="59.9" y="0.5" width="3" height="1" fill="#f0b030"/><rect x="66.5" y="0.5" width="2" height="2" fill="#ffffff"/><rect x="7.1" y="7.1" width="2" height="1" fill="#f0b030"/><rect x="13.7" y="7.1" width="1" height="2" fill="#ffffff"/><rect x="20.3" y="7.1" width="1" height="2" fill="#ffffff"/><rect x="26.9" y="7.1" width="1" height="1" fill="#ffffff"/><rect x="33.5" y="7.1" width="3" height="2" fill="#ffffff"/><rect x="46.7" y="7.1" width="2" height="2" fill="#e8e8e8"/><rect x="53.3" y="7.1" width="2" height="2" fill="#e8e8e8"/><rect x="59.9" y="7.1" width="1" height="1" fill="#ffffff"/><rect x="66.5" y="7.1" width="1" height="1" fill="#e8e8e8"/><rect x="73.1" y="7.1" width="2" height="2" fill="#ffffff"/><rect x="0.5" y="13.7" width="2" height="2" fill="#ffffff"/><rect x="7.1" y="13.7" width="3" height="1" fill="#ffffff"/><rect x="13.7" y="13.7" width="1" height="2" fill="#d8d8d8"/><rect x="20.3" y="13.7" width="2" height="1" fill="#cccccc"/><rect x="26.9" y="13.7" width="1" height="1" fill="#ffffff"/><rect x="40.1" y="13.7" width="1" height="2" fill="#f0b030"/><rect x="46.7" y="13.7" width="3" height="1" fill="#f0b030"/><rect x="53.3" y="13.7" width="2" height="1" fill="#d8d8d8"/><rect x="59.9" y="13.7" width="3" height="1" fill="#a0a0a0"/><rect x="73.1" y="13.7" width="2" height="2" fill="#cccccc"/><rect x="0.5" y="20.3" width="2" height="1" fill="#f4f4f4"/><rect x="7.1" y="20.3" width="2" height="1" fill="#d8d8d8"/><rect x="13.7" y="20.3" width="2" height="2" fill="#eeeeee"/><rect x="26.9" y="20.3" width="1" height="2" fill="#cccccc"/><rect x="33.5" y="20.3" width="1" height="2" fill="#e8e8e8"/><rect x="46.7" y="20.3" width="2" height="2" fill="#ffffff"/><rect x="53.3" y="20.3" width="3" height="2" fill="#cccccc"/><rect x="59.9" y="20.3" width="2" height="1" fill="#e8e8e8"/><rect x="66.5" y="20.3" width="1" height="2" fill="#cccccc"/><rect x="73.1" y="20.3" width="1" height="1" fill="#d8d8d8"/><rect x="0.5" y="26.9" width="2" height="1" fill="#ffffff"/><rect x="7.1" y="26.9" width="2" height="2" fill="#f0b030"/><rect x="13.7" y="26.9" width="1" height="2" fill="#f4f4f4"/><rect x="20.3" y="26.9" width="2" height="2" fill="#ffffff"/><rect x="26.9" y="26.9" width="2" height="2" fill="#eeeeee"/><rect x="33.5" y="26.9" width="3" height="2" fill="#ffffff"/><rect x="40.1" y="26.9" width="1" height="2" fill="#ffffff"/><rect x="46.7" y="26.9" width="1" height="2" fill="#ffffff"/><rect x="53.3" y="26.9" width="1" height="1" fill="#f4f4f4"/><rect x="59.9" y="26.9" width="1" height="2" fill="#a0a0a0"/><rect x="66.5" y="26.9" width="2" height="2" fill="#f4f4f4"/><rect x="73.1" y="26.9" width="1" height="2" fill="#ffffff"/><rect x="7.1" y="33.5" width="2" height="3" fill="#ffffff"/><rect x="13.7" y="33.5" width="2" height="3" fill="#ffffff"/><rect x="20.3" y="33.5" width="2" height="3" fill="#e8e8e8"/><rect x="26.9" y="33.5" width="4" height="3" fill="#a0a0a0"/><rect x="33.5" y="33.5" width="4" height="3" fill="#ffffff"/><rect x="40.1" y="33.5" width="2" height="3" fill="#e8e8e8"/><rect x="46.7" y="33.5" width="2" height="2" fill="#ffffff"/><rect x="59.9" y="33.5" width="4" height="3" fill="#cccccc"/><rect x="66.5" y="33.5" width="3" height="2" fill="#a0a0a0"/><rect x="73.1" y="33.5" width="3" height="3" fill="#d8d8d8"/><rect x="0.5" y="40.1" width="3" height="1" fill="#ffffff"/><rect x="7.1" y="40.1" width="2" height="2" fill="#f0b030"/><rect x="13.7" y="40.1" width="2" height="2" fill="#d8d8d8"/><rect x="20.3" y="40.1" width="2" height="1" fill="#a0a0a0"/><rect x="26.9" y="40.1" width="1" height="2" fill="#a0a0a0"/><rect x="33.5" y="40.1" width="2" height="1" fill="#f0b030"/><rect x="40.1" y="40.1" width="2" height="2" fill="#f0b030"/><rect x="46.7" y="40.1" width="3" height="2" fill="#eeeeee"/><rect x="53.3" y="40.1" width="3" height="2" fill="#cccccc"/><rect x="59.9" y="40.1" width="2" height="2" fill="#ffffff"/><rect x="66.5" y="40.1" width="2" height="2" fill="#f0b030"/><rect x="73.1" y="40.1" width="1" height="2" fill="#cccccc"/><rect x="0.5" y="46.7" width="2" height="1" fill="#ffffff"/><rect x="7.1" y="46.7" width="2" height="1" fill="#f0b030"/><rect x="13.7" y="46.7" width="3" height="1" fill="#e8e8e8"/><rect x="20.3" y="46.7" width="1" height="2" fill="#a0a0a0"/><rect x="26.9" y="46.7" width="2" height="1" fill="#ffffff"/><rect x="33.5" y="46.7" width="1" height="1" fill="#ffffff"/><rect x="40.1" y="46.7" width="2" height="2" fill="#a0a0a0"/><rect x="46.7" y="46.7" width="1" height="2" fill="#d8d8d8"/><rect x="59.9" y="46.7" width="3" height="2" fill="#f4f4f4"/><rect x="66.5" y="46.7" width="3" height="2" fill="#ffffff"/><rect x="73.1" y="46.7" width="2" height="2" fill="#eeeeee"/><rect x="0.5" y="53.3" width="1" height="2" fill="#d8d8d8"/><rect x="7.1" y="53.3" width="2" height="1" fill="#e8e8e8"/><rect x="13.7" y="53.3" width="2" height="2" fill="#e8e8e8"/><rect x="40.1" y="53.3" width="2" height="2" fill="#ffffff"/></svg>
<div style="left:1871px;top:653px;width:6px;height:361px;background:#2c2c2c;border-radius:3px;"></div>
<div style="left:1871px;top:653px;width:6px;height:200px;background:#6a6a6a;border-radius:3px;"></div>
</body></html>
